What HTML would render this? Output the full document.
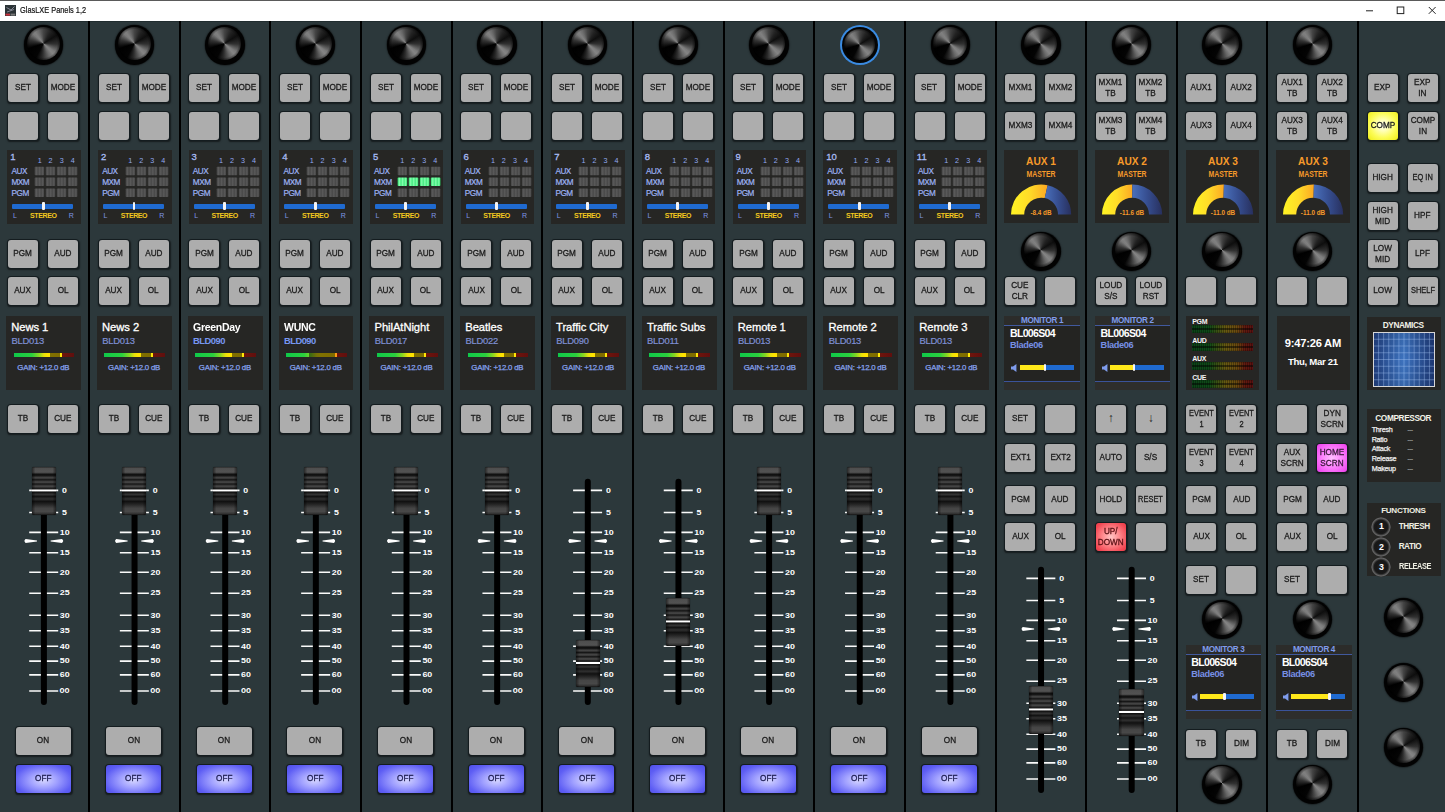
<!DOCTYPE html>
<html lang="en"><head><meta charset="utf-8"><title>GlasLXE Panels 1,2</title>
<style>
*{box-sizing:border-box}
html,body{margin:0;padding:0}
body{width:1445px;height:812px;position:relative;overflow:hidden;background:#2c383b;font-family:"Liberation Sans",sans-serif;color:#222}
.a,.b,.k,.pn,.dv,.t{position:absolute}
#tb{position:absolute;left:0;top:0;width:1445px;height:21px;background:#fff;border-top:1px solid #5a5a5a}
#tb .ti{position:absolute;left:19.5px;top:4px;font-size:9.3px;line-height:11px;color:#111;white-space:nowrap;transform:scaleX(.795);transform-origin:0 0;-webkit-text-stroke:.2px #111}
.dv{top:21px;width:2px;height:791px;background:#000}
.b{width:30px;height:28px;background:#adadad;border-radius:3px;box-shadow:0 0 0 1px #141c1f,.5px 1px 1.5px .6px rgba(0,0,0,.5);font-size:9.3px;line-height:10.8px;text-align:center;color:#1c1c1c;display:flex;align-items:center;justify-content:center;white-space:nowrap}
.b span{display:block;position:relative;top:-.3px;transform:scaleX(.88);-webkit-text-stroke:.32px currentColor}
.b span.n{transform:scaleX(.8)}
.b span.ar{font-size:12px;transform:none;-webkit-text-stroke:0}
.b.w{width:55px}
.b.blue{background:radial-gradient(ellipse at 50% 55%,#d6d6ff 0%,#a0a0ff 35%,#5e5ef4 75%,#4e4ee8 100%);color:#1c1c50}
.b.red{background:radial-gradient(ellipse at 50% 50%,#ffc4c4 0%,#ff8a8e 40%,#f2434f 85%);color:#5a1014}
.b.yel{background:radial-gradient(ellipse at 50% 48%,#fffff6 0%,#ffffb4 28%,#fcfc58 60%,#f2f022 92%)}
.b.mag{background:radial-gradient(ellipse at 50% 50%,#ffc0ff 0%,#fc84fc 45%,#f048f0 90%);color:#3a1a3a}
.k{width:39.4px;height:39.4px;border-radius:50%;background:#020202;box-shadow:0 0 1.5px .5px rgba(0,0,0,.6)}
.k i{position:absolute;left:2.9px;top:1.9px;width:33.2px;height:33.2px;filter:blur(.3px);border-radius:50%;background:radial-gradient(circle closest-side,rgba(0,0,0,0) 0,rgba(0,0,0,0) 84%,rgba(0,0,0,.45) 100%),conic-gradient(from 0deg,#444 0deg,#222 30deg,#0e0e0e 58deg,#303030 92deg,#7c7c7c 126deg,#848484 138deg,#6a6a6a 155deg,#2a2a2a 185deg,#040404 208deg,#000 252deg,#343434 284deg,#7a7a7a 312deg,#808080 322deg,#6c6c6c 338deg,#444 360deg)}
.k.sel{background:#050505;box-shadow:0 0 0 2px #3a8be2}
.k.sel{width:36px;height:36px}
.k.sel i{left:2.2px;top:1.6px;width:31.5px;height:31.5px}
.pn{background:#262624}
.t{white-space:nowrap;line-height:1}
.cell{position:absolute;width:9.6px;height:8.6px;background:linear-gradient(90deg,#444,#585858 22%,#484848 40%,#585858 58%,#484848 76%,#545454 90%,#424242);border-radius:1px;filter:blur(.45px)}
.cell.g{background:linear-gradient(90deg,#2cd868,#7cffa8 30%,#48ec84 50%,#7cffa8 70%,#2cd868)}
.cap{position:absolute;width:24.2px;height:47.4px;border-radius:1.5px;background:linear-gradient(180deg,rgba(255,255,255,0) 46.2%,#fff 47.6%,#fff 50.2%,rgba(255,255,255,0) 51.6%),linear-gradient(90deg,rgba(0,0,0,.5),rgba(0,0,0,0) 14%,rgba(0,0,0,0) 86%,rgba(0,0,0,.5)),linear-gradient(180deg,#2a2a2a 0%,#4e4e4e 3%,#525252 10%,#484848 12%,#101010 15%,#161616 18%,#404040 21.5%,#444 23%,#151515 26.5%,#424242 30.5%,#464646 32%,#161616 35.5%,#444 39.5%,#444 41%,#1a1a1a 44.5%,#2c2c2c 46%,#101010 52.5%,#353535 57%,#131313 61.5%,#303030 66.5%,#111 72%,#262626 78%,#454545 86%,#484848 93%,#333 97%,#141414 100%);box-shadow:0 0 1px rgba(0,0,0,.8)}
</style></head>
<body>
<div id="tb"><svg class="a" style="left:5px;top:4px" width="11" height="11" viewBox="0 0 11 11"><rect width="11" height="11" fill="#2b3336"/><path d="M1.5 2.5 L6 5 L9.5 1.5 M2 7 L9 4.5" stroke="#aab" stroke-width=".7" fill="none"/><rect x="0.5" y="8.6" width="4.5" height="2" fill="#c8323c"/><rect x="5.6" y="8.6" width="4.6" height="2" fill="#777"/></svg><span class="ti">GlasLXE Panels 1,2</span><svg class="a" style="left:1360px;top:0" width="85" height="20" viewBox="0 0 85 20"><g stroke="#222" stroke-width="1" fill="none"><path d="M6 9.8H13"/><rect x="37.2" y="6" width="6.6" height="6.6"/><path d="M68.8 6L75.6 12.8M75.6 6L68.8 12.8"/></g></svg></div>
<svg width="0" height="0" style="position:absolute"><defs><linearGradient id="cd" x1="0" x2="1" y1="0" y2="0" gradientUnits="objectBoundingBox"><stop offset="0" stop-color="#444"/><stop offset=".2" stop-color="#5a5a5a"/><stop offset=".36" stop-color="#484848"/><stop offset=".52" stop-color="#5a5a5a"/><stop offset=".68" stop-color="#484848"/><stop offset=".84" stop-color="#585858"/><stop offset="1" stop-color="#434343"/></linearGradient><linearGradient id="cg" x1="0" x2="1" y1="0" y2="0" gradientUnits="objectBoundingBox"><stop offset="0" stop-color="#2cd868"/><stop offset=".2" stop-color="#84ffae"/><stop offset=".36" stop-color="#44e880"/><stop offset=".52" stop-color="#84ffae"/><stop offset=".68" stop-color="#44e880"/><stop offset=".84" stop-color="#7cffa8"/><stop offset="1" stop-color="#2cd868"/></linearGradient></defs></svg>
<div class="a" style="left:0;top:21px;width:1445px;height:1.4px;background:linear-gradient(180deg,#1c2729,#263235)"></div><div class="dv" style="left:88.00px"></div><div class="dv" style="left:178.65px"></div><div class="dv" style="left:269.30px"></div><div class="dv" style="left:359.95px"></div><div class="dv" style="left:450.60px"></div><div class="dv" style="left:541.25px"></div><div class="dv" style="left:631.90px"></div><div class="dv" style="left:722.55px"></div><div class="dv" style="left:813.20px"></div><div class="dv" style="left:903.85px"></div><div class="dv" style="left:994.50px"></div><div class="dv" style="left:1085.15px"></div><div class="dv" style="left:1175.80px"></div><div class="dv" style="left:1266.45px"></div><div class="dv" style="left:1357.10px"></div>

<!-- channel 1 -->
<div class="k" style="left:24.00px;top:25.40px"><i></i></div><div class="b" style="left:8.00px;top:74px"><span>SET</span></div><div class="b" style="left:48.00px;top:74px"><span>MODE</span></div><div class="b" style="left:8.00px;top:112px"></div><div class="b" style="left:48.00px;top:112px"></div><div class="pn" style="left:7.30px;top:150.3px;width:73.6px;height:73.3px"><div class="t" style="left:3.00px;top:2.20px;font-size:9.5px;color:#a8bcf4;-webkit-text-stroke:.3px #a8bcf4;">1</div><div class="t" style="left:32.40px;top:6.80px;font-size:7.2px;color:#93aaf0;transform:translateX(-50%);">1</div><div class="t" style="left:43.30px;top:6.80px;font-size:7.2px;color:#93aaf0;transform:translateX(-50%);">2</div><div class="t" style="left:54.40px;top:6.80px;font-size:7.2px;color:#93aaf0;transform:translateX(-50%);">3</div><div class="t" style="left:65.40px;top:6.80px;font-size:7.2px;color:#93aaf0;transform:translateX(-50%);">4</div><div class="t" style="left:4.20px;top:17.40px;font-size:8.2px;color:#9db2f2;letter-spacing:-.45px;-webkit-text-stroke:.2px #9db2f2;">AUX</div><div class="t" style="left:4.20px;top:28.40px;font-size:8.2px;color:#9db2f2;letter-spacing:-.45px;-webkit-text-stroke:.2px #9db2f2;">MXM</div><div class="t" style="left:4.20px;top:39.30px;font-size:8.2px;color:#9db2f2;letter-spacing:-.45px;-webkit-text-stroke:.2px #9db2f2;">PGM</div><svg class="a" style="left:0;top:0;filter:blur(.35px)" width="74" height="50" viewBox="0 0 74 50"><rect x="27.6" y="16.7" width="9.6" height="8.5" rx=".8" fill="url(#cd)"/><rect x="38.7" y="16.7" width="9.6" height="8.5" rx=".8" fill="url(#cd)"/><rect x="49.8" y="16.7" width="9.6" height="8.5" rx=".8" fill="url(#cd)"/><rect x="60.8" y="16.7" width="9.6" height="8.5" rx=".8" fill="url(#cd)"/><rect x="27.6" y="27.6" width="9.6" height="8.5" rx=".8" fill="url(#cd)"/><rect x="38.7" y="27.6" width="9.6" height="8.5" rx=".8" fill="url(#cd)"/><rect x="49.8" y="27.6" width="9.6" height="8.5" rx=".8" fill="url(#cd)"/><rect x="60.8" y="27.6" width="9.6" height="8.5" rx=".8" fill="url(#cd)"/><rect x="27.6" y="38.5" width="9.6" height="8.5" rx=".8" fill="url(#cd)"/><rect x="38.7" y="38.5" width="9.6" height="8.5" rx=".8" fill="url(#cd)"/><rect x="49.8" y="38.5" width="9.6" height="8.5" rx=".8" fill="url(#cd)"/><rect x="60.8" y="38.5" width="9.6" height="8.5" rx=".8" fill="url(#cd)"/></svg><div class="a" style="left:5.2px;top:53.8px;width:61px;height:4.8px;background:#1f6ad0;border-radius:1px"></div><div class="a" style="left:34.6px;top:52.2px;width:2.9px;height:8px;background:#f4f4f4;border-radius:1px"></div><div class="t" style="left:5.60px;top:62.20px;font-size:7px;color:#7f96e4;">L</div><div class="t" style="left:36.00px;top:62.00px;font-size:7px;color:#f2c81e;font-weight:bold;transform:translateX(-50%);letter-spacing:-.4px;">STEREO</div><div class="t" style="left:61.40px;top:62.20px;font-size:7px;color:#7f96e4;">R</div></div><div class="b" style="left:8.00px;top:240px"><span>PGM</span></div><div class="b" style="left:48.00px;top:240px"><span>AUD</span></div><div class="b" style="left:8.00px;top:277px"><span>AUX</span></div><div class="b" style="left:48.00px;top:277px"><span>OL</span></div><div class="pn" style="left:6.10px;top:316.2px;width:74.9px;height:73.6px"><div class="t" style="left:5.20px;top:5.60px;font-size:11.2px;color:#fff;letter-spacing:-.05px;-webkit-text-stroke:.3px #fff;">News 1</div><div class="t" style="left:5.40px;top:19.50px;font-size:9.4px;color:#7f90d4;letter-spacing:-.25px;-webkit-text-stroke:.2px #7f90d4;">BLD013</div><div class="a" style="left:7.6px;top:36.8px;width:60.8px;height:4.2px;background:linear-gradient(90deg,#0ec849 0.0%,#2bcf3e 30.0%,#2cd03d 30.0%,#8bd720 42.0%,#8cd81f 42.0%,#e7df0c 50.0%,#e8e00b 50.0%,#fee300 56.0%,#ffe300 56.0%,#ffe100 60.5%,#7f7000 60.5%,#7f6b00 77.0%,#ffe808 77.0%,#ffe808 80.0%,#70150c 80.0%,#5f0f0e 100.0%)"></div><div class="t" style="left:37.20px;top:47.80px;font-size:7.8px;color:#86a2ee;transform:translateX(-50%);letter-spacing:-.2px;-webkit-text-stroke:.25px #86a2ee;">GAIN: +12.0 dB</div></div><div class="b" style="left:8.00px;top:405px"><span>TB</span></div><div class="b" style="left:48.00px;top:405px"><span>CUE</span></div><svg class="a" style="left:20px;top:474px" width="62" height="238" viewBox="0 0 62 238"><g transform="translate(0.00 0.40)"><rect x="20.9" y="4.3" width="6" height="226.2" rx="3" fill="#000"/><g stroke="#fafafa" stroke-width="1.6"><path d="M9.2 16.0H20.9M26.9 16.0H38.2"/><path d="M9.2 38.1H20.9M26.9 38.1H38.2"/><path d="M9.2 58.0H20.9M26.9 58.0H38.2"/><path d="M9.2 78.3H20.9M26.9 78.3H38.2"/><path d="M9.2 97.9H20.9M26.9 97.9H38.2"/><path d="M9.2 118.8H20.9M26.9 118.8H38.2"/><path d="M9.2 140.9H20.9M26.9 140.9H38.2"/><path d="M9.2 156.3H20.9M26.9 156.3H38.2"/><path d="M9.2 171.8H20.9M26.9 171.8H38.2"/><path d="M9.2 186.7H20.9M26.9 186.7H38.2"/><path d="M9.2 200.5H20.9M26.9 200.5H38.2"/><path d="M9.2 216.6H20.9M26.9 216.6H38.2"/></g><path d="M5.6 64.7Q3.2 66.6 5.6 68.5L17 67.0V66.1Z" fill="#fff"/><path d="M42 64.7Q44.4 66.6 42 68.5L30.6 67.0V66.1Z" fill="#fff"/><g font-family="Liberation Sans, sans-serif" font-weight="bold" font-size="7.6" fill="#fff"><text x="42" y="18.4" textLength="4.9" lengthAdjust="spacingAndGlyphs">0</text><text x="42" y="40.5" textLength="4.9" lengthAdjust="spacingAndGlyphs">5</text><text x="39.8" y="60.4" textLength="9.9" lengthAdjust="spacingAndGlyphs">10</text><text x="39.8" y="80.6" textLength="9.9" lengthAdjust="spacingAndGlyphs">15</text><text x="39.8" y="100.2" textLength="9.9" lengthAdjust="spacingAndGlyphs">20</text><text x="39.8" y="121.1" textLength="9.9" lengthAdjust="spacingAndGlyphs">25</text><text x="39.8" y="143.2" textLength="9.9" lengthAdjust="spacingAndGlyphs">30</text><text x="39.8" y="158.7" textLength="9.9" lengthAdjust="spacingAndGlyphs">35</text><text x="39.8" y="174.2" textLength="9.9" lengthAdjust="spacingAndGlyphs">40</text><text x="39.8" y="189.0" textLength="9.9" lengthAdjust="spacingAndGlyphs">50</text><text x="39.8" y="202.8" textLength="9.9" lengthAdjust="spacingAndGlyphs">60</text><text x="39.6" y="218.8" font-size="8.4" textLength="10" lengthAdjust="spacingAndGlyphs">oo</text></g></g></svg><div class="cap" style="left:31.60px;top:467.30px"></div><div class="b w" style="left:15.50px;top:727px"><span>ON</span></div><div class="b w blue" style="left:15.50px;top:765px"><span>OFF</span></div>
<!-- channel 2 -->
<div class="k" style="left:114.65px;top:25.40px"><i></i></div><div class="b" style="left:98.65px;top:74px"><span>SET</span></div><div class="b" style="left:138.65px;top:74px"><span>MODE</span></div><div class="b" style="left:98.65px;top:112px"></div><div class="b" style="left:138.65px;top:112px"></div><div class="pn" style="left:97.95px;top:150.3px;width:73.6px;height:73.3px"><div class="t" style="left:3.00px;top:2.20px;font-size:9.5px;color:#a8bcf4;-webkit-text-stroke:.3px #a8bcf4;">2</div><div class="t" style="left:32.40px;top:6.80px;font-size:7.2px;color:#93aaf0;transform:translateX(-50%);">1</div><div class="t" style="left:43.30px;top:6.80px;font-size:7.2px;color:#93aaf0;transform:translateX(-50%);">2</div><div class="t" style="left:54.40px;top:6.80px;font-size:7.2px;color:#93aaf0;transform:translateX(-50%);">3</div><div class="t" style="left:65.40px;top:6.80px;font-size:7.2px;color:#93aaf0;transform:translateX(-50%);">4</div><div class="t" style="left:4.20px;top:17.40px;font-size:8.2px;color:#9db2f2;letter-spacing:-.45px;-webkit-text-stroke:.2px #9db2f2;">AUX</div><div class="t" style="left:4.20px;top:28.40px;font-size:8.2px;color:#9db2f2;letter-spacing:-.45px;-webkit-text-stroke:.2px #9db2f2;">MXM</div><div class="t" style="left:4.20px;top:39.30px;font-size:8.2px;color:#9db2f2;letter-spacing:-.45px;-webkit-text-stroke:.2px #9db2f2;">PGM</div><svg class="a" style="left:0;top:0;filter:blur(.35px)" width="74" height="50" viewBox="0 0 74 50"><rect x="27.6" y="16.7" width="9.6" height="8.5" rx=".8" fill="url(#cd)"/><rect x="38.7" y="16.7" width="9.6" height="8.5" rx=".8" fill="url(#cd)"/><rect x="49.8" y="16.7" width="9.6" height="8.5" rx=".8" fill="url(#cd)"/><rect x="60.8" y="16.7" width="9.6" height="8.5" rx=".8" fill="url(#cd)"/><rect x="27.6" y="27.6" width="9.6" height="8.5" rx=".8" fill="url(#cd)"/><rect x="38.7" y="27.6" width="9.6" height="8.5" rx=".8" fill="url(#cd)"/><rect x="49.8" y="27.6" width="9.6" height="8.5" rx=".8" fill="url(#cd)"/><rect x="60.8" y="27.6" width="9.6" height="8.5" rx=".8" fill="url(#cd)"/><rect x="27.6" y="38.5" width="9.6" height="8.5" rx=".8" fill="url(#cd)"/><rect x="38.7" y="38.5" width="9.6" height="8.5" rx=".8" fill="url(#cd)"/><rect x="49.8" y="38.5" width="9.6" height="8.5" rx=".8" fill="url(#cd)"/><rect x="60.8" y="38.5" width="9.6" height="8.5" rx=".8" fill="url(#cd)"/></svg><div class="a" style="left:5.2px;top:53.8px;width:61px;height:4.8px;background:#1f6ad0;border-radius:1px"></div><div class="a" style="left:34.6px;top:52.2px;width:2.9px;height:8px;background:#f4f4f4;border-radius:1px"></div><div class="t" style="left:5.60px;top:62.20px;font-size:7px;color:#7f96e4;">L</div><div class="t" style="left:36.00px;top:62.00px;font-size:7px;color:#f2c81e;font-weight:bold;transform:translateX(-50%);letter-spacing:-.4px;">STEREO</div><div class="t" style="left:61.40px;top:62.20px;font-size:7px;color:#7f96e4;">R</div></div><div class="b" style="left:98.65px;top:240px"><span>PGM</span></div><div class="b" style="left:138.65px;top:240px"><span>AUD</span></div><div class="b" style="left:98.65px;top:277px"><span>AUX</span></div><div class="b" style="left:138.65px;top:277px"><span>OL</span></div><div class="pn" style="left:96.90px;top:316.2px;width:74.9px;height:73.6px"><div class="t" style="left:5.20px;top:5.60px;font-size:11.2px;color:#fff;letter-spacing:-.05px;-webkit-text-stroke:.3px #fff;">News 2</div><div class="t" style="left:5.40px;top:19.50px;font-size:9.4px;color:#7f90d4;letter-spacing:-.25px;-webkit-text-stroke:.2px #7f90d4;">BLD013</div><div class="a" style="left:7.6px;top:36.8px;width:60.8px;height:4.2px;background:linear-gradient(90deg,#0ec849 0.0%,#2bcf3e 30.0%,#2cd03d 30.0%,#8bd720 42.0%,#8cd81f 42.0%,#e7df0c 50.0%,#e8e00b 50.0%,#fee300 56.0%,#ffe300 56.0%,#ffe100 60.5%,#7f7000 60.5%,#7f6b00 77.0%,#ffe808 77.0%,#ffe808 80.0%,#70150c 80.0%,#5f0f0e 100.0%)"></div><div class="t" style="left:37.20px;top:47.80px;font-size:7.8px;color:#86a2ee;transform:translateX(-50%);letter-spacing:-.2px;-webkit-text-stroke:.25px #86a2ee;">GAIN: +12.0 dB</div></div><div class="b" style="left:98.65px;top:405px"><span>TB</span></div><div class="b" style="left:138.65px;top:405px"><span>CUE</span></div><svg class="a" style="left:110px;top:474px" width="62" height="238" viewBox="0 0 62 238"><g transform="translate(0.65 0.40)"><rect x="20.9" y="4.3" width="6" height="226.2" rx="3" fill="#000"/><g stroke="#fafafa" stroke-width="1.6"><path d="M9.2 16.0H20.9M26.9 16.0H38.2"/><path d="M9.2 38.1H20.9M26.9 38.1H38.2"/><path d="M9.2 58.0H20.9M26.9 58.0H38.2"/><path d="M9.2 78.3H20.9M26.9 78.3H38.2"/><path d="M9.2 97.9H20.9M26.9 97.9H38.2"/><path d="M9.2 118.8H20.9M26.9 118.8H38.2"/><path d="M9.2 140.9H20.9M26.9 140.9H38.2"/><path d="M9.2 156.3H20.9M26.9 156.3H38.2"/><path d="M9.2 171.8H20.9M26.9 171.8H38.2"/><path d="M9.2 186.7H20.9M26.9 186.7H38.2"/><path d="M9.2 200.5H20.9M26.9 200.5H38.2"/><path d="M9.2 216.6H20.9M26.9 216.6H38.2"/></g><path d="M5.6 64.7Q3.2 66.6 5.6 68.5L17 67.0V66.1Z" fill="#fff"/><path d="M42 64.7Q44.4 66.6 42 68.5L30.6 67.0V66.1Z" fill="#fff"/><g font-family="Liberation Sans, sans-serif" font-weight="bold" font-size="7.6" fill="#fff"><text x="42" y="18.4" textLength="4.9" lengthAdjust="spacingAndGlyphs">0</text><text x="42" y="40.5" textLength="4.9" lengthAdjust="spacingAndGlyphs">5</text><text x="39.8" y="60.4" textLength="9.9" lengthAdjust="spacingAndGlyphs">10</text><text x="39.8" y="80.6" textLength="9.9" lengthAdjust="spacingAndGlyphs">15</text><text x="39.8" y="100.2" textLength="9.9" lengthAdjust="spacingAndGlyphs">20</text><text x="39.8" y="121.1" textLength="9.9" lengthAdjust="spacingAndGlyphs">25</text><text x="39.8" y="143.2" textLength="9.9" lengthAdjust="spacingAndGlyphs">30</text><text x="39.8" y="158.7" textLength="9.9" lengthAdjust="spacingAndGlyphs">35</text><text x="39.8" y="174.2" textLength="9.9" lengthAdjust="spacingAndGlyphs">40</text><text x="39.8" y="189.0" textLength="9.9" lengthAdjust="spacingAndGlyphs">50</text><text x="39.8" y="202.8" textLength="9.9" lengthAdjust="spacingAndGlyphs">60</text><text x="39.6" y="218.8" font-size="8.4" textLength="10" lengthAdjust="spacingAndGlyphs">oo</text></g></g></svg><div class="cap" style="left:122.25px;top:467.30px"></div><div class="b w" style="left:106.15px;top:727px"><span>ON</span></div><div class="b w blue" style="left:106.15px;top:765px"><span>OFF</span></div>
<!-- channel 3 -->
<div class="k" style="left:205.30px;top:25.40px"><i></i></div><div class="b" style="left:189.30px;top:74px"><span>SET</span></div><div class="b" style="left:229.30px;top:74px"><span>MODE</span></div><div class="b" style="left:189.30px;top:112px"></div><div class="b" style="left:229.30px;top:112px"></div><div class="pn" style="left:188.60px;top:150.3px;width:73.6px;height:73.3px"><div class="t" style="left:3.00px;top:2.20px;font-size:9.5px;color:#a8bcf4;-webkit-text-stroke:.3px #a8bcf4;">3</div><div class="t" style="left:32.40px;top:6.80px;font-size:7.2px;color:#93aaf0;transform:translateX(-50%);">1</div><div class="t" style="left:43.30px;top:6.80px;font-size:7.2px;color:#93aaf0;transform:translateX(-50%);">2</div><div class="t" style="left:54.40px;top:6.80px;font-size:7.2px;color:#93aaf0;transform:translateX(-50%);">3</div><div class="t" style="left:65.40px;top:6.80px;font-size:7.2px;color:#93aaf0;transform:translateX(-50%);">4</div><div class="t" style="left:4.20px;top:17.40px;font-size:8.2px;color:#9db2f2;letter-spacing:-.45px;-webkit-text-stroke:.2px #9db2f2;">AUX</div><div class="t" style="left:4.20px;top:28.40px;font-size:8.2px;color:#9db2f2;letter-spacing:-.45px;-webkit-text-stroke:.2px #9db2f2;">MXM</div><div class="t" style="left:4.20px;top:39.30px;font-size:8.2px;color:#9db2f2;letter-spacing:-.45px;-webkit-text-stroke:.2px #9db2f2;">PGM</div><svg class="a" style="left:0;top:0;filter:blur(.35px)" width="74" height="50" viewBox="0 0 74 50"><rect x="27.6" y="16.7" width="9.6" height="8.5" rx=".8" fill="url(#cd)"/><rect x="38.7" y="16.7" width="9.6" height="8.5" rx=".8" fill="url(#cd)"/><rect x="49.8" y="16.7" width="9.6" height="8.5" rx=".8" fill="url(#cd)"/><rect x="60.8" y="16.7" width="9.6" height="8.5" rx=".8" fill="url(#cd)"/><rect x="27.6" y="27.6" width="9.6" height="8.5" rx=".8" fill="url(#cd)"/><rect x="38.7" y="27.6" width="9.6" height="8.5" rx=".8" fill="url(#cd)"/><rect x="49.8" y="27.6" width="9.6" height="8.5" rx=".8" fill="url(#cd)"/><rect x="60.8" y="27.6" width="9.6" height="8.5" rx=".8" fill="url(#cd)"/><rect x="27.6" y="38.5" width="9.6" height="8.5" rx=".8" fill="url(#cd)"/><rect x="38.7" y="38.5" width="9.6" height="8.5" rx=".8" fill="url(#cd)"/><rect x="49.8" y="38.5" width="9.6" height="8.5" rx=".8" fill="url(#cd)"/><rect x="60.8" y="38.5" width="9.6" height="8.5" rx=".8" fill="url(#cd)"/></svg><div class="a" style="left:5.2px;top:53.8px;width:61px;height:4.8px;background:#1f6ad0;border-radius:1px"></div><div class="a" style="left:34.6px;top:52.2px;width:2.9px;height:8px;background:#f4f4f4;border-radius:1px"></div><div class="t" style="left:5.60px;top:62.20px;font-size:7px;color:#7f96e4;">L</div><div class="t" style="left:36.00px;top:62.00px;font-size:7px;color:#f2c81e;font-weight:bold;transform:translateX(-50%);letter-spacing:-.4px;">STEREO</div><div class="t" style="left:61.40px;top:62.20px;font-size:7px;color:#7f96e4;">R</div></div><div class="b" style="left:189.30px;top:240px"><span>PGM</span></div><div class="b" style="left:229.30px;top:240px"><span>AUD</span></div><div class="b" style="left:189.30px;top:277px"><span>AUX</span></div><div class="b" style="left:229.30px;top:277px"><span>OL</span></div><div class="pn" style="left:187.70px;top:316.2px;width:74.9px;height:73.6px"><div class="t" style="left:5.20px;top:5.60px;font-size:11.2px;color:#fff;font-weight:bold;transform:scaleX(0.94);transform-origin:0 50%;letter-spacing:-.3px;">GreenDay</div><div class="t" style="left:5.40px;top:19.50px;font-size:9.4px;color:#7696f0;font-weight:bold;letter-spacing:-.5px;">BLD090</div><div class="a" style="left:7.6px;top:36.8px;width:60.8px;height:4.2px;background:linear-gradient(90deg,#0ec849 0.0%,#2bcf3e 30.0%,#2cd03d 30.0%,#8bd720 42.0%,#8cd81f 42.0%,#e7df0c 50.0%,#e8e00b 50.0%,#fee300 56.0%,#ffe300 56.0%,#ffe100 60.5%,#7f7000 60.5%,#7f6b00 77.0%,#ffe808 77.0%,#ffe808 80.0%,#70150c 80.0%,#5f0f0e 100.0%)"></div><div class="t" style="left:37.20px;top:47.80px;font-size:7.8px;color:#86a2ee;transform:translateX(-50%);letter-spacing:-.2px;-webkit-text-stroke:.25px #86a2ee;">GAIN: +12.0 dB</div></div><div class="b" style="left:189.30px;top:405px"><span>TB</span></div><div class="b" style="left:229.30px;top:405px"><span>CUE</span></div><svg class="a" style="left:201px;top:474px" width="62" height="238" viewBox="0 0 62 238"><g transform="translate(0.30 0.40)"><rect x="20.9" y="4.3" width="6" height="226.2" rx="3" fill="#000"/><g stroke="#fafafa" stroke-width="1.6"><path d="M9.2 16.0H20.9M26.9 16.0H38.2"/><path d="M9.2 38.1H20.9M26.9 38.1H38.2"/><path d="M9.2 58.0H20.9M26.9 58.0H38.2"/><path d="M9.2 78.3H20.9M26.9 78.3H38.2"/><path d="M9.2 97.9H20.9M26.9 97.9H38.2"/><path d="M9.2 118.8H20.9M26.9 118.8H38.2"/><path d="M9.2 140.9H20.9M26.9 140.9H38.2"/><path d="M9.2 156.3H20.9M26.9 156.3H38.2"/><path d="M9.2 171.8H20.9M26.9 171.8H38.2"/><path d="M9.2 186.7H20.9M26.9 186.7H38.2"/><path d="M9.2 200.5H20.9M26.9 200.5H38.2"/><path d="M9.2 216.6H20.9M26.9 216.6H38.2"/></g><path d="M5.6 64.7Q3.2 66.6 5.6 68.5L17 67.0V66.1Z" fill="#fff"/><path d="M42 64.7Q44.4 66.6 42 68.5L30.6 67.0V66.1Z" fill="#fff"/><g font-family="Liberation Sans, sans-serif" font-weight="bold" font-size="7.6" fill="#fff"><text x="42" y="18.4" textLength="4.9" lengthAdjust="spacingAndGlyphs">0</text><text x="42" y="40.5" textLength="4.9" lengthAdjust="spacingAndGlyphs">5</text><text x="39.8" y="60.4" textLength="9.9" lengthAdjust="spacingAndGlyphs">10</text><text x="39.8" y="80.6" textLength="9.9" lengthAdjust="spacingAndGlyphs">15</text><text x="39.8" y="100.2" textLength="9.9" lengthAdjust="spacingAndGlyphs">20</text><text x="39.8" y="121.1" textLength="9.9" lengthAdjust="spacingAndGlyphs">25</text><text x="39.8" y="143.2" textLength="9.9" lengthAdjust="spacingAndGlyphs">30</text><text x="39.8" y="158.7" textLength="9.9" lengthAdjust="spacingAndGlyphs">35</text><text x="39.8" y="174.2" textLength="9.9" lengthAdjust="spacingAndGlyphs">40</text><text x="39.8" y="189.0" textLength="9.9" lengthAdjust="spacingAndGlyphs">50</text><text x="39.8" y="202.8" textLength="9.9" lengthAdjust="spacingAndGlyphs">60</text><text x="39.6" y="218.8" font-size="8.4" textLength="10" lengthAdjust="spacingAndGlyphs">oo</text></g></g></svg><div class="cap" style="left:212.90px;top:467.30px"></div><div class="b w" style="left:196.80px;top:727px"><span>ON</span></div><div class="b w blue" style="left:196.80px;top:765px"><span>OFF</span></div>
<!-- channel 4 -->
<div class="k" style="left:295.95px;top:25.40px"><i></i></div><div class="b" style="left:279.95px;top:74px"><span>SET</span></div><div class="b" style="left:319.95px;top:74px"><span>MODE</span></div><div class="b" style="left:279.95px;top:112px"></div><div class="b" style="left:319.95px;top:112px"></div><div class="pn" style="left:279.25px;top:150.3px;width:73.6px;height:73.3px"><div class="t" style="left:3.00px;top:2.20px;font-size:9.5px;color:#a8bcf4;-webkit-text-stroke:.3px #a8bcf4;">4</div><div class="t" style="left:32.40px;top:6.80px;font-size:7.2px;color:#93aaf0;transform:translateX(-50%);">1</div><div class="t" style="left:43.30px;top:6.80px;font-size:7.2px;color:#93aaf0;transform:translateX(-50%);">2</div><div class="t" style="left:54.40px;top:6.80px;font-size:7.2px;color:#93aaf0;transform:translateX(-50%);">3</div><div class="t" style="left:65.40px;top:6.80px;font-size:7.2px;color:#93aaf0;transform:translateX(-50%);">4</div><div class="t" style="left:4.20px;top:17.40px;font-size:8.2px;color:#9db2f2;letter-spacing:-.45px;-webkit-text-stroke:.2px #9db2f2;">AUX</div><div class="t" style="left:4.20px;top:28.40px;font-size:8.2px;color:#9db2f2;letter-spacing:-.45px;-webkit-text-stroke:.2px #9db2f2;">MXM</div><div class="t" style="left:4.20px;top:39.30px;font-size:8.2px;color:#9db2f2;letter-spacing:-.45px;-webkit-text-stroke:.2px #9db2f2;">PGM</div><svg class="a" style="left:0;top:0;filter:blur(.35px)" width="74" height="50" viewBox="0 0 74 50"><rect x="27.6" y="16.7" width="9.6" height="8.5" rx=".8" fill="url(#cd)"/><rect x="38.7" y="16.7" width="9.6" height="8.5" rx=".8" fill="url(#cd)"/><rect x="49.8" y="16.7" width="9.6" height="8.5" rx=".8" fill="url(#cd)"/><rect x="60.8" y="16.7" width="9.6" height="8.5" rx=".8" fill="url(#cd)"/><rect x="27.6" y="27.6" width="9.6" height="8.5" rx=".8" fill="url(#cd)"/><rect x="38.7" y="27.6" width="9.6" height="8.5" rx=".8" fill="url(#cd)"/><rect x="49.8" y="27.6" width="9.6" height="8.5" rx=".8" fill="url(#cd)"/><rect x="60.8" y="27.6" width="9.6" height="8.5" rx=".8" fill="url(#cd)"/><rect x="27.6" y="38.5" width="9.6" height="8.5" rx=".8" fill="url(#cd)"/><rect x="38.7" y="38.5" width="9.6" height="8.5" rx=".8" fill="url(#cd)"/><rect x="49.8" y="38.5" width="9.6" height="8.5" rx=".8" fill="url(#cd)"/><rect x="60.8" y="38.5" width="9.6" height="8.5" rx=".8" fill="url(#cd)"/></svg><div class="a" style="left:5.2px;top:53.8px;width:61px;height:4.8px;background:#1f6ad0;border-radius:1px"></div><div class="a" style="left:34.6px;top:52.2px;width:2.9px;height:8px;background:#f4f4f4;border-radius:1px"></div><div class="t" style="left:5.60px;top:62.20px;font-size:7px;color:#7f96e4;">L</div><div class="t" style="left:36.00px;top:62.00px;font-size:7px;color:#f2c81e;font-weight:bold;transform:translateX(-50%);letter-spacing:-.4px;">STEREO</div><div class="t" style="left:61.40px;top:62.20px;font-size:7px;color:#7f96e4;">R</div></div><div class="b" style="left:279.95px;top:240px"><span>PGM</span></div><div class="b" style="left:319.95px;top:240px"><span>AUD</span></div><div class="b" style="left:279.95px;top:277px"><span>AUX</span></div><div class="b" style="left:319.95px;top:277px"><span>OL</span></div><div class="pn" style="left:278.50px;top:316.2px;width:74.9px;height:73.6px"><div class="t" style="left:5.20px;top:5.60px;font-size:11.2px;color:#fff;font-weight:bold;transform:scaleX(0.94);transform-origin:0 50%;letter-spacing:-.3px;">WUNC</div><div class="t" style="left:5.40px;top:19.50px;font-size:9.4px;color:#7696f0;font-weight:bold;letter-spacing:-.5px;">BLD090</div><div class="a" style="left:7.6px;top:36.8px;width:60.8px;height:4.2px;background:linear-gradient(90deg,#0ec849 0.0%,#2bcf3e 30.0%,#2cd03d 30.0%,#6fd528 38.5%,#386a14 38.5%,#456b10 42.0%,#466c0f 42.0%,#736f06 50.0%,#747005 50.0%,#7f7100 56.0%,#7f6b00 80.0%,#ff9a14 80.0%,#ff9a14 83.5%,#6d140c 83.5%,#5f0f0e 100.0%)"></div><div class="t" style="left:37.20px;top:47.80px;font-size:7.8px;color:#86a2ee;transform:translateX(-50%);letter-spacing:-.2px;-webkit-text-stroke:.25px #86a2ee;">GAIN: +12.0 dB</div></div><div class="b" style="left:279.95px;top:405px"><span>TB</span></div><div class="b" style="left:319.95px;top:405px"><span>CUE</span></div><svg class="a" style="left:291px;top:474px" width="62" height="238" viewBox="0 0 62 238"><g transform="translate(0.95 0.40)"><rect x="20.9" y="4.3" width="6" height="226.2" rx="3" fill="#000"/><g stroke="#fafafa" stroke-width="1.6"><path d="M9.2 16.0H20.9M26.9 16.0H38.2"/><path d="M9.2 38.1H20.9M26.9 38.1H38.2"/><path d="M9.2 58.0H20.9M26.9 58.0H38.2"/><path d="M9.2 78.3H20.9M26.9 78.3H38.2"/><path d="M9.2 97.9H20.9M26.9 97.9H38.2"/><path d="M9.2 118.8H20.9M26.9 118.8H38.2"/><path d="M9.2 140.9H20.9M26.9 140.9H38.2"/><path d="M9.2 156.3H20.9M26.9 156.3H38.2"/><path d="M9.2 171.8H20.9M26.9 171.8H38.2"/><path d="M9.2 186.7H20.9M26.9 186.7H38.2"/><path d="M9.2 200.5H20.9M26.9 200.5H38.2"/><path d="M9.2 216.6H20.9M26.9 216.6H38.2"/></g><path d="M5.6 64.7Q3.2 66.6 5.6 68.5L17 67.0V66.1Z" fill="#fff"/><path d="M42 64.7Q44.4 66.6 42 68.5L30.6 67.0V66.1Z" fill="#fff"/><g font-family="Liberation Sans, sans-serif" font-weight="bold" font-size="7.6" fill="#fff"><text x="42" y="18.4" textLength="4.9" lengthAdjust="spacingAndGlyphs">0</text><text x="42" y="40.5" textLength="4.9" lengthAdjust="spacingAndGlyphs">5</text><text x="39.8" y="60.4" textLength="9.9" lengthAdjust="spacingAndGlyphs">10</text><text x="39.8" y="80.6" textLength="9.9" lengthAdjust="spacingAndGlyphs">15</text><text x="39.8" y="100.2" textLength="9.9" lengthAdjust="spacingAndGlyphs">20</text><text x="39.8" y="121.1" textLength="9.9" lengthAdjust="spacingAndGlyphs">25</text><text x="39.8" y="143.2" textLength="9.9" lengthAdjust="spacingAndGlyphs">30</text><text x="39.8" y="158.7" textLength="9.9" lengthAdjust="spacingAndGlyphs">35</text><text x="39.8" y="174.2" textLength="9.9" lengthAdjust="spacingAndGlyphs">40</text><text x="39.8" y="189.0" textLength="9.9" lengthAdjust="spacingAndGlyphs">50</text><text x="39.8" y="202.8" textLength="9.9" lengthAdjust="spacingAndGlyphs">60</text><text x="39.6" y="218.8" font-size="8.4" textLength="10" lengthAdjust="spacingAndGlyphs">oo</text></g></g></svg><div class="cap" style="left:303.55px;top:467.30px"></div><div class="b w" style="left:287.45px;top:727px"><span>ON</span></div><div class="b w blue" style="left:287.45px;top:765px"><span>OFF</span></div>
<!-- channel 5 -->
<div class="k" style="left:386.60px;top:25.40px"><i></i></div><div class="b" style="left:370.60px;top:74px"><span>SET</span></div><div class="b" style="left:410.60px;top:74px"><span>MODE</span></div><div class="b" style="left:370.60px;top:112px"></div><div class="b" style="left:410.60px;top:112px"></div><div class="pn" style="left:369.90px;top:150.3px;width:73.6px;height:73.3px"><div class="t" style="left:3.00px;top:2.20px;font-size:9.5px;color:#a8bcf4;-webkit-text-stroke:.3px #a8bcf4;">5</div><div class="t" style="left:32.40px;top:6.80px;font-size:7.2px;color:#93aaf0;transform:translateX(-50%);">1</div><div class="t" style="left:43.30px;top:6.80px;font-size:7.2px;color:#93aaf0;transform:translateX(-50%);">2</div><div class="t" style="left:54.40px;top:6.80px;font-size:7.2px;color:#93aaf0;transform:translateX(-50%);">3</div><div class="t" style="left:65.40px;top:6.80px;font-size:7.2px;color:#93aaf0;transform:translateX(-50%);">4</div><div class="t" style="left:4.20px;top:17.40px;font-size:8.2px;color:#9db2f2;letter-spacing:-.45px;-webkit-text-stroke:.2px #9db2f2;">AUX</div><div class="t" style="left:4.20px;top:28.40px;font-size:8.2px;color:#9db2f2;letter-spacing:-.45px;-webkit-text-stroke:.2px #9db2f2;">MXM</div><div class="t" style="left:4.20px;top:39.30px;font-size:8.2px;color:#9db2f2;letter-spacing:-.45px;-webkit-text-stroke:.2px #9db2f2;">PGM</div><svg class="a" style="left:0;top:0;filter:blur(.35px)" width="74" height="50" viewBox="0 0 74 50"><rect x="27.6" y="16.7" width="9.6" height="8.5" rx=".8" fill="url(#cd)"/><rect x="38.7" y="16.7" width="9.6" height="8.5" rx=".8" fill="url(#cd)"/><rect x="49.8" y="16.7" width="9.6" height="8.5" rx=".8" fill="url(#cd)"/><rect x="60.8" y="16.7" width="9.6" height="8.5" rx=".8" fill="url(#cd)"/><rect x="27.6" y="27.6" width="9.6" height="8.5" rx=".8" fill="url(#cg)"/><rect x="38.7" y="27.6" width="9.6" height="8.5" rx=".8" fill="url(#cg)"/><rect x="49.8" y="27.6" width="9.6" height="8.5" rx=".8" fill="url(#cg)"/><rect x="60.8" y="27.6" width="9.6" height="8.5" rx=".8" fill="url(#cg)"/><rect x="27.6" y="38.5" width="9.6" height="8.5" rx=".8" fill="url(#cd)"/><rect x="38.7" y="38.5" width="9.6" height="8.5" rx=".8" fill="url(#cd)"/><rect x="49.8" y="38.5" width="9.6" height="8.5" rx=".8" fill="url(#cd)"/><rect x="60.8" y="38.5" width="9.6" height="8.5" rx=".8" fill="url(#cd)"/></svg><div class="a" style="left:5.2px;top:53.8px;width:61px;height:4.8px;background:#1f6ad0;border-radius:1px"></div><div class="a" style="left:34.6px;top:52.2px;width:2.9px;height:8px;background:#f4f4f4;border-radius:1px"></div><div class="t" style="left:5.60px;top:62.20px;font-size:7px;color:#7f96e4;">L</div><div class="t" style="left:36.00px;top:62.00px;font-size:7px;color:#f2c81e;font-weight:bold;transform:translateX(-50%);letter-spacing:-.4px;">STEREO</div><div class="t" style="left:61.40px;top:62.20px;font-size:7px;color:#7f96e4;">R</div></div><div class="b" style="left:370.60px;top:240px"><span>PGM</span></div><div class="b" style="left:410.60px;top:240px"><span>AUD</span></div><div class="b" style="left:370.60px;top:277px"><span>AUX</span></div><div class="b" style="left:410.60px;top:277px"><span>OL</span></div><div class="pn" style="left:369.30px;top:316.2px;width:74.9px;height:73.6px"><div class="t" style="left:5.20px;top:5.60px;font-size:11.2px;color:#fff;letter-spacing:-.05px;-webkit-text-stroke:.3px #fff;">PhilAtNight</div><div class="t" style="left:5.40px;top:19.50px;font-size:9.4px;color:#7f90d4;letter-spacing:-.25px;-webkit-text-stroke:.2px #7f90d4;">BLD017</div><div class="a" style="left:7.6px;top:36.8px;width:60.8px;height:4.2px;background:linear-gradient(90deg,#0ec849 0.0%,#2bcf3e 30.0%,#2cd03d 30.0%,#8bd720 42.0%,#8cd81f 42.0%,#e7df0c 50.0%,#e8e00b 50.0%,#fee300 56.0%,#ffe300 56.0%,#ffe100 60.5%,#7f7000 60.5%,#7f6b00 77.0%,#ffe808 77.0%,#ffe808 80.0%,#70150c 80.0%,#5f0f0e 100.0%)"></div><div class="t" style="left:37.20px;top:47.80px;font-size:7.8px;color:#86a2ee;transform:translateX(-50%);letter-spacing:-.2px;-webkit-text-stroke:.25px #86a2ee;">GAIN: +12.0 dB</div></div><div class="b" style="left:370.60px;top:405px"><span>TB</span></div><div class="b" style="left:410.60px;top:405px"><span>CUE</span></div><svg class="a" style="left:382px;top:474px" width="62" height="238" viewBox="0 0 62 238"><g transform="translate(0.60 0.40)"><rect x="20.9" y="4.3" width="6" height="226.2" rx="3" fill="#000"/><g stroke="#fafafa" stroke-width="1.6"><path d="M9.2 16.0H20.9M26.9 16.0H38.2"/><path d="M9.2 38.1H20.9M26.9 38.1H38.2"/><path d="M9.2 58.0H20.9M26.9 58.0H38.2"/><path d="M9.2 78.3H20.9M26.9 78.3H38.2"/><path d="M9.2 97.9H20.9M26.9 97.9H38.2"/><path d="M9.2 118.8H20.9M26.9 118.8H38.2"/><path d="M9.2 140.9H20.9M26.9 140.9H38.2"/><path d="M9.2 156.3H20.9M26.9 156.3H38.2"/><path d="M9.2 171.8H20.9M26.9 171.8H38.2"/><path d="M9.2 186.7H20.9M26.9 186.7H38.2"/><path d="M9.2 200.5H20.9M26.9 200.5H38.2"/><path d="M9.2 216.6H20.9M26.9 216.6H38.2"/></g><path d="M5.6 64.7Q3.2 66.6 5.6 68.5L17 67.0V66.1Z" fill="#fff"/><path d="M42 64.7Q44.4 66.6 42 68.5L30.6 67.0V66.1Z" fill="#fff"/><g font-family="Liberation Sans, sans-serif" font-weight="bold" font-size="7.6" fill="#fff"><text x="42" y="18.4" textLength="4.9" lengthAdjust="spacingAndGlyphs">0</text><text x="42" y="40.5" textLength="4.9" lengthAdjust="spacingAndGlyphs">5</text><text x="39.8" y="60.4" textLength="9.9" lengthAdjust="spacingAndGlyphs">10</text><text x="39.8" y="80.6" textLength="9.9" lengthAdjust="spacingAndGlyphs">15</text><text x="39.8" y="100.2" textLength="9.9" lengthAdjust="spacingAndGlyphs">20</text><text x="39.8" y="121.1" textLength="9.9" lengthAdjust="spacingAndGlyphs">25</text><text x="39.8" y="143.2" textLength="9.9" lengthAdjust="spacingAndGlyphs">30</text><text x="39.8" y="158.7" textLength="9.9" lengthAdjust="spacingAndGlyphs">35</text><text x="39.8" y="174.2" textLength="9.9" lengthAdjust="spacingAndGlyphs">40</text><text x="39.8" y="189.0" textLength="9.9" lengthAdjust="spacingAndGlyphs">50</text><text x="39.8" y="202.8" textLength="9.9" lengthAdjust="spacingAndGlyphs">60</text><text x="39.6" y="218.8" font-size="8.4" textLength="10" lengthAdjust="spacingAndGlyphs">oo</text></g></g></svg><div class="cap" style="left:394.20px;top:467.30px"></div><div class="b w" style="left:378.10px;top:727px"><span>ON</span></div><div class="b w blue" style="left:378.10px;top:765px"><span>OFF</span></div>
<!-- channel 6 -->
<div class="k" style="left:477.25px;top:25.40px"><i></i></div><div class="b" style="left:461.25px;top:74px"><span>SET</span></div><div class="b" style="left:501.25px;top:74px"><span>MODE</span></div><div class="b" style="left:461.25px;top:112px"></div><div class="b" style="left:501.25px;top:112px"></div><div class="pn" style="left:460.55px;top:150.3px;width:73.6px;height:73.3px"><div class="t" style="left:3.00px;top:2.20px;font-size:9.5px;color:#a8bcf4;-webkit-text-stroke:.3px #a8bcf4;">6</div><div class="t" style="left:32.40px;top:6.80px;font-size:7.2px;color:#93aaf0;transform:translateX(-50%);">1</div><div class="t" style="left:43.30px;top:6.80px;font-size:7.2px;color:#93aaf0;transform:translateX(-50%);">2</div><div class="t" style="left:54.40px;top:6.80px;font-size:7.2px;color:#93aaf0;transform:translateX(-50%);">3</div><div class="t" style="left:65.40px;top:6.80px;font-size:7.2px;color:#93aaf0;transform:translateX(-50%);">4</div><div class="t" style="left:4.20px;top:17.40px;font-size:8.2px;color:#9db2f2;letter-spacing:-.45px;-webkit-text-stroke:.2px #9db2f2;">AUX</div><div class="t" style="left:4.20px;top:28.40px;font-size:8.2px;color:#9db2f2;letter-spacing:-.45px;-webkit-text-stroke:.2px #9db2f2;">MXM</div><div class="t" style="left:4.20px;top:39.30px;font-size:8.2px;color:#9db2f2;letter-spacing:-.45px;-webkit-text-stroke:.2px #9db2f2;">PGM</div><svg class="a" style="left:0;top:0;filter:blur(.35px)" width="74" height="50" viewBox="0 0 74 50"><rect x="27.6" y="16.7" width="9.6" height="8.5" rx=".8" fill="url(#cd)"/><rect x="38.7" y="16.7" width="9.6" height="8.5" rx=".8" fill="url(#cd)"/><rect x="49.8" y="16.7" width="9.6" height="8.5" rx=".8" fill="url(#cd)"/><rect x="60.8" y="16.7" width="9.6" height="8.5" rx=".8" fill="url(#cd)"/><rect x="27.6" y="27.6" width="9.6" height="8.5" rx=".8" fill="url(#cd)"/><rect x="38.7" y="27.6" width="9.6" height="8.5" rx=".8" fill="url(#cd)"/><rect x="49.8" y="27.6" width="9.6" height="8.5" rx=".8" fill="url(#cd)"/><rect x="60.8" y="27.6" width="9.6" height="8.5" rx=".8" fill="url(#cd)"/><rect x="27.6" y="38.5" width="9.6" height="8.5" rx=".8" fill="url(#cd)"/><rect x="38.7" y="38.5" width="9.6" height="8.5" rx=".8" fill="url(#cd)"/><rect x="49.8" y="38.5" width="9.6" height="8.5" rx=".8" fill="url(#cd)"/><rect x="60.8" y="38.5" width="9.6" height="8.5" rx=".8" fill="url(#cd)"/></svg><div class="a" style="left:5.2px;top:53.8px;width:61px;height:4.8px;background:#1f6ad0;border-radius:1px"></div><div class="a" style="left:34.6px;top:52.2px;width:2.9px;height:8px;background:#f4f4f4;border-radius:1px"></div><div class="t" style="left:5.60px;top:62.20px;font-size:7px;color:#7f96e4;">L</div><div class="t" style="left:36.00px;top:62.00px;font-size:7px;color:#f2c81e;font-weight:bold;transform:translateX(-50%);letter-spacing:-.4px;">STEREO</div><div class="t" style="left:61.40px;top:62.20px;font-size:7px;color:#7f96e4;">R</div></div><div class="b" style="left:461.25px;top:240px"><span>PGM</span></div><div class="b" style="left:501.25px;top:240px"><span>AUD</span></div><div class="b" style="left:461.25px;top:277px"><span>AUX</span></div><div class="b" style="left:501.25px;top:277px"><span>OL</span></div><div class="pn" style="left:460.10px;top:316.2px;width:74.9px;height:73.6px"><div class="t" style="left:5.20px;top:5.60px;font-size:11.2px;color:#fff;letter-spacing:-.05px;-webkit-text-stroke:.3px #fff;">Beatles</div><div class="t" style="left:5.40px;top:19.50px;font-size:9.4px;color:#7f90d4;letter-spacing:-.25px;-webkit-text-stroke:.2px #7f90d4;">BLD022</div><div class="a" style="left:7.6px;top:36.8px;width:60.8px;height:4.2px;background:linear-gradient(90deg,#0ec849 0.0%,#2bcf3e 30.0%,#2cd03d 30.0%,#8bd720 42.0%,#8cd81f 42.0%,#e7df0c 50.0%,#e8e00b 50.0%,#fee300 56.0%,#ffe300 56.0%,#ffe100 60.5%,#7f7000 60.5%,#7f6b00 77.0%,#ffe808 77.0%,#ffe808 80.0%,#70150c 80.0%,#5f0f0e 100.0%)"></div><div class="t" style="left:37.20px;top:47.80px;font-size:7.8px;color:#86a2ee;transform:translateX(-50%);letter-spacing:-.2px;-webkit-text-stroke:.25px #86a2ee;">GAIN: +12.0 dB</div></div><div class="b" style="left:461.25px;top:405px"><span>TB</span></div><div class="b" style="left:501.25px;top:405px"><span>CUE</span></div><svg class="a" style="left:473px;top:474px" width="62" height="238" viewBox="0 0 62 238"><g transform="translate(0.25 0.40)"><rect x="20.9" y="4.3" width="6" height="226.2" rx="3" fill="#000"/><g stroke="#fafafa" stroke-width="1.6"><path d="M9.2 16.0H20.9M26.9 16.0H38.2"/><path d="M9.2 38.1H20.9M26.9 38.1H38.2"/><path d="M9.2 58.0H20.9M26.9 58.0H38.2"/><path d="M9.2 78.3H20.9M26.9 78.3H38.2"/><path d="M9.2 97.9H20.9M26.9 97.9H38.2"/><path d="M9.2 118.8H20.9M26.9 118.8H38.2"/><path d="M9.2 140.9H20.9M26.9 140.9H38.2"/><path d="M9.2 156.3H20.9M26.9 156.3H38.2"/><path d="M9.2 171.8H20.9M26.9 171.8H38.2"/><path d="M9.2 186.7H20.9M26.9 186.7H38.2"/><path d="M9.2 200.5H20.9M26.9 200.5H38.2"/><path d="M9.2 216.6H20.9M26.9 216.6H38.2"/></g><path d="M5.6 64.7Q3.2 66.6 5.6 68.5L17 67.0V66.1Z" fill="#fff"/><path d="M42 64.7Q44.4 66.6 42 68.5L30.6 67.0V66.1Z" fill="#fff"/><g font-family="Liberation Sans, sans-serif" font-weight="bold" font-size="7.6" fill="#fff"><text x="42" y="18.4" textLength="4.9" lengthAdjust="spacingAndGlyphs">0</text><text x="42" y="40.5" textLength="4.9" lengthAdjust="spacingAndGlyphs">5</text><text x="39.8" y="60.4" textLength="9.9" lengthAdjust="spacingAndGlyphs">10</text><text x="39.8" y="80.6" textLength="9.9" lengthAdjust="spacingAndGlyphs">15</text><text x="39.8" y="100.2" textLength="9.9" lengthAdjust="spacingAndGlyphs">20</text><text x="39.8" y="121.1" textLength="9.9" lengthAdjust="spacingAndGlyphs">25</text><text x="39.8" y="143.2" textLength="9.9" lengthAdjust="spacingAndGlyphs">30</text><text x="39.8" y="158.7" textLength="9.9" lengthAdjust="spacingAndGlyphs">35</text><text x="39.8" y="174.2" textLength="9.9" lengthAdjust="spacingAndGlyphs">40</text><text x="39.8" y="189.0" textLength="9.9" lengthAdjust="spacingAndGlyphs">50</text><text x="39.8" y="202.8" textLength="9.9" lengthAdjust="spacingAndGlyphs">60</text><text x="39.6" y="218.8" font-size="8.4" textLength="10" lengthAdjust="spacingAndGlyphs">oo</text></g></g></svg><div class="cap" style="left:484.85px;top:467.30px"></div><div class="b w" style="left:468.75px;top:727px"><span>ON</span></div><div class="b w blue" style="left:468.75px;top:765px"><span>OFF</span></div>
<!-- channel 7 -->
<div class="k" style="left:567.90px;top:25.40px"><i></i></div><div class="b" style="left:551.90px;top:74px"><span>SET</span></div><div class="b" style="left:591.90px;top:74px"><span>MODE</span></div><div class="b" style="left:551.90px;top:112px"></div><div class="b" style="left:591.90px;top:112px"></div><div class="pn" style="left:551.20px;top:150.3px;width:73.6px;height:73.3px"><div class="t" style="left:3.00px;top:2.20px;font-size:9.5px;color:#a8bcf4;-webkit-text-stroke:.3px #a8bcf4;">7</div><div class="t" style="left:32.40px;top:6.80px;font-size:7.2px;color:#93aaf0;transform:translateX(-50%);">1</div><div class="t" style="left:43.30px;top:6.80px;font-size:7.2px;color:#93aaf0;transform:translateX(-50%);">2</div><div class="t" style="left:54.40px;top:6.80px;font-size:7.2px;color:#93aaf0;transform:translateX(-50%);">3</div><div class="t" style="left:65.40px;top:6.80px;font-size:7.2px;color:#93aaf0;transform:translateX(-50%);">4</div><div class="t" style="left:4.20px;top:17.40px;font-size:8.2px;color:#9db2f2;letter-spacing:-.45px;-webkit-text-stroke:.2px #9db2f2;">AUX</div><div class="t" style="left:4.20px;top:28.40px;font-size:8.2px;color:#9db2f2;letter-spacing:-.45px;-webkit-text-stroke:.2px #9db2f2;">MXM</div><div class="t" style="left:4.20px;top:39.30px;font-size:8.2px;color:#9db2f2;letter-spacing:-.45px;-webkit-text-stroke:.2px #9db2f2;">PGM</div><svg class="a" style="left:0;top:0;filter:blur(.35px)" width="74" height="50" viewBox="0 0 74 50"><rect x="27.6" y="16.7" width="9.6" height="8.5" rx=".8" fill="url(#cd)"/><rect x="38.7" y="16.7" width="9.6" height="8.5" rx=".8" fill="url(#cd)"/><rect x="49.8" y="16.7" width="9.6" height="8.5" rx=".8" fill="url(#cd)"/><rect x="60.8" y="16.7" width="9.6" height="8.5" rx=".8" fill="url(#cd)"/><rect x="27.6" y="27.6" width="9.6" height="8.5" rx=".8" fill="url(#cd)"/><rect x="38.7" y="27.6" width="9.6" height="8.5" rx=".8" fill="url(#cd)"/><rect x="49.8" y="27.6" width="9.6" height="8.5" rx=".8" fill="url(#cd)"/><rect x="60.8" y="27.6" width="9.6" height="8.5" rx=".8" fill="url(#cd)"/><rect x="27.6" y="38.5" width="9.6" height="8.5" rx=".8" fill="url(#cd)"/><rect x="38.7" y="38.5" width="9.6" height="8.5" rx=".8" fill="url(#cd)"/><rect x="49.8" y="38.5" width="9.6" height="8.5" rx=".8" fill="url(#cd)"/><rect x="60.8" y="38.5" width="9.6" height="8.5" rx=".8" fill="url(#cd)"/></svg><div class="a" style="left:5.2px;top:53.8px;width:61px;height:4.8px;background:#1f6ad0;border-radius:1px"></div><div class="a" style="left:34.6px;top:52.2px;width:2.9px;height:8px;background:#f4f4f4;border-radius:1px"></div><div class="t" style="left:5.60px;top:62.20px;font-size:7px;color:#7f96e4;">L</div><div class="t" style="left:36.00px;top:62.00px;font-size:7px;color:#f2c81e;font-weight:bold;transform:translateX(-50%);letter-spacing:-.4px;">STEREO</div><div class="t" style="left:61.40px;top:62.20px;font-size:7px;color:#7f96e4;">R</div></div><div class="b" style="left:551.90px;top:240px"><span>PGM</span></div><div class="b" style="left:591.90px;top:240px"><span>AUD</span></div><div class="b" style="left:551.90px;top:277px"><span>AUX</span></div><div class="b" style="left:591.90px;top:277px"><span>OL</span></div><div class="pn" style="left:550.90px;top:316.2px;width:74.9px;height:73.6px"><div class="t" style="left:5.20px;top:5.60px;font-size:11.2px;color:#fff;letter-spacing:-.05px;-webkit-text-stroke:.3px #fff;">Traffic City</div><div class="t" style="left:5.40px;top:19.50px;font-size:9.4px;color:#7f90d4;letter-spacing:-.25px;-webkit-text-stroke:.2px #7f90d4;">BLD090</div><div class="a" style="left:7.6px;top:36.8px;width:60.8px;height:4.2px;background:linear-gradient(90deg,#0ec849 0.0%,#2bcf3e 30.0%,#2cd03d 30.0%,#8bd720 42.0%,#8cd81f 42.0%,#e7df0c 50.0%,#e8e00b 50.0%,#fee300 56.0%,#ffe300 56.0%,#ffe100 60.5%,#7f7000 60.5%,#7f6b00 77.0%,#ffe808 77.0%,#ffe808 80.0%,#70150c 80.0%,#5f0f0e 100.0%)"></div><div class="t" style="left:37.20px;top:47.80px;font-size:7.8px;color:#86a2ee;transform:translateX(-50%);letter-spacing:-.2px;-webkit-text-stroke:.25px #86a2ee;">GAIN: +12.0 dB</div></div><div class="b" style="left:551.90px;top:405px"><span>TB</span></div><div class="b" style="left:591.90px;top:405px"><span>CUE</span></div><svg class="a" style="left:563px;top:474px" width="62" height="238" viewBox="0 0 62 238"><g transform="translate(0.90 0.40)"><rect x="20.9" y="4.3" width="6" height="226.2" rx="3" fill="#000"/><g stroke="#fafafa" stroke-width="1.6"><path d="M9.2 16.0H20.9M26.9 16.0H38.2"/><path d="M9.2 38.1H20.9M26.9 38.1H38.2"/><path d="M9.2 58.0H20.9M26.9 58.0H38.2"/><path d="M9.2 78.3H20.9M26.9 78.3H38.2"/><path d="M9.2 97.9H20.9M26.9 97.9H38.2"/><path d="M9.2 118.8H20.9M26.9 118.8H38.2"/><path d="M9.2 140.9H20.9M26.9 140.9H38.2"/><path d="M9.2 156.3H20.9M26.9 156.3H38.2"/><path d="M9.2 171.8H20.9M26.9 171.8H38.2"/><path d="M9.2 186.7H20.9M26.9 186.7H38.2"/><path d="M9.2 200.5H20.9M26.9 200.5H38.2"/><path d="M9.2 216.6H20.9M26.9 216.6H38.2"/></g><path d="M5.6 64.7Q3.2 66.6 5.6 68.5L17 67.0V66.1Z" fill="#fff"/><path d="M42 64.7Q44.4 66.6 42 68.5L30.6 67.0V66.1Z" fill="#fff"/><g font-family="Liberation Sans, sans-serif" font-weight="bold" font-size="7.6" fill="#fff"><text x="42" y="18.4" textLength="4.9" lengthAdjust="spacingAndGlyphs">0</text><text x="42" y="40.5" textLength="4.9" lengthAdjust="spacingAndGlyphs">5</text><text x="39.8" y="60.4" textLength="9.9" lengthAdjust="spacingAndGlyphs">10</text><text x="39.8" y="80.6" textLength="9.9" lengthAdjust="spacingAndGlyphs">15</text><text x="39.8" y="100.2" textLength="9.9" lengthAdjust="spacingAndGlyphs">20</text><text x="39.8" y="121.1" textLength="9.9" lengthAdjust="spacingAndGlyphs">25</text><text x="39.8" y="143.2" textLength="9.9" lengthAdjust="spacingAndGlyphs">30</text><text x="39.8" y="158.7" textLength="9.9" lengthAdjust="spacingAndGlyphs">35</text><text x="39.8" y="174.2" textLength="9.9" lengthAdjust="spacingAndGlyphs">40</text><text x="39.8" y="189.0" textLength="9.9" lengthAdjust="spacingAndGlyphs">50</text><text x="39.8" y="202.8" textLength="9.9" lengthAdjust="spacingAndGlyphs">60</text><text x="39.6" y="218.8" font-size="8.4" textLength="10" lengthAdjust="spacingAndGlyphs">oo</text></g></g></svg><div class="cap" style="left:575.50px;top:639.80px"></div><div class="b w" style="left:559.40px;top:727px"><span>ON</span></div><div class="b w blue" style="left:559.40px;top:765px"><span>OFF</span></div>
<!-- channel 8 -->
<div class="k" style="left:658.55px;top:25.40px"><i></i></div><div class="b" style="left:642.55px;top:74px"><span>SET</span></div><div class="b" style="left:682.55px;top:74px"><span>MODE</span></div><div class="b" style="left:642.55px;top:112px"></div><div class="b" style="left:682.55px;top:112px"></div><div class="pn" style="left:641.85px;top:150.3px;width:73.6px;height:73.3px"><div class="t" style="left:3.00px;top:2.20px;font-size:9.5px;color:#a8bcf4;-webkit-text-stroke:.3px #a8bcf4;">8</div><div class="t" style="left:32.40px;top:6.80px;font-size:7.2px;color:#93aaf0;transform:translateX(-50%);">1</div><div class="t" style="left:43.30px;top:6.80px;font-size:7.2px;color:#93aaf0;transform:translateX(-50%);">2</div><div class="t" style="left:54.40px;top:6.80px;font-size:7.2px;color:#93aaf0;transform:translateX(-50%);">3</div><div class="t" style="left:65.40px;top:6.80px;font-size:7.2px;color:#93aaf0;transform:translateX(-50%);">4</div><div class="t" style="left:4.20px;top:17.40px;font-size:8.2px;color:#9db2f2;letter-spacing:-.45px;-webkit-text-stroke:.2px #9db2f2;">AUX</div><div class="t" style="left:4.20px;top:28.40px;font-size:8.2px;color:#9db2f2;letter-spacing:-.45px;-webkit-text-stroke:.2px #9db2f2;">MXM</div><div class="t" style="left:4.20px;top:39.30px;font-size:8.2px;color:#9db2f2;letter-spacing:-.45px;-webkit-text-stroke:.2px #9db2f2;">PGM</div><svg class="a" style="left:0;top:0;filter:blur(.35px)" width="74" height="50" viewBox="0 0 74 50"><rect x="27.6" y="16.7" width="9.6" height="8.5" rx=".8" fill="url(#cd)"/><rect x="38.7" y="16.7" width="9.6" height="8.5" rx=".8" fill="url(#cd)"/><rect x="49.8" y="16.7" width="9.6" height="8.5" rx=".8" fill="url(#cd)"/><rect x="60.8" y="16.7" width="9.6" height="8.5" rx=".8" fill="url(#cd)"/><rect x="27.6" y="27.6" width="9.6" height="8.5" rx=".8" fill="url(#cd)"/><rect x="38.7" y="27.6" width="9.6" height="8.5" rx=".8" fill="url(#cd)"/><rect x="49.8" y="27.6" width="9.6" height="8.5" rx=".8" fill="url(#cd)"/><rect x="60.8" y="27.6" width="9.6" height="8.5" rx=".8" fill="url(#cd)"/><rect x="27.6" y="38.5" width="9.6" height="8.5" rx=".8" fill="url(#cd)"/><rect x="38.7" y="38.5" width="9.6" height="8.5" rx=".8" fill="url(#cd)"/><rect x="49.8" y="38.5" width="9.6" height="8.5" rx=".8" fill="url(#cd)"/><rect x="60.8" y="38.5" width="9.6" height="8.5" rx=".8" fill="url(#cd)"/></svg><div class="a" style="left:5.2px;top:53.8px;width:61px;height:4.8px;background:#1f6ad0;border-radius:1px"></div><div class="a" style="left:34.6px;top:52.2px;width:2.9px;height:8px;background:#f4f4f4;border-radius:1px"></div><div class="t" style="left:5.60px;top:62.20px;font-size:7px;color:#7f96e4;">L</div><div class="t" style="left:36.00px;top:62.00px;font-size:7px;color:#f2c81e;font-weight:bold;transform:translateX(-50%);letter-spacing:-.4px;">STEREO</div><div class="t" style="left:61.40px;top:62.20px;font-size:7px;color:#7f96e4;">R</div></div><div class="b" style="left:642.55px;top:240px"><span>PGM</span></div><div class="b" style="left:682.55px;top:240px"><span>AUD</span></div><div class="b" style="left:642.55px;top:277px"><span>AUX</span></div><div class="b" style="left:682.55px;top:277px"><span>OL</span></div><div class="pn" style="left:641.70px;top:316.2px;width:74.9px;height:73.6px"><div class="t" style="left:5.20px;top:5.60px;font-size:11.2px;color:#fff;letter-spacing:-.05px;-webkit-text-stroke:.3px #fff;">Traffic Subs</div><div class="t" style="left:5.40px;top:19.50px;font-size:9.4px;color:#7f90d4;letter-spacing:-.25px;-webkit-text-stroke:.2px #7f90d4;">BLD011</div><div class="a" style="left:7.6px;top:36.8px;width:60.8px;height:4.2px;background:linear-gradient(90deg,#0ec849 0.0%,#2bcf3e 30.0%,#2cd03d 30.0%,#8bd720 42.0%,#8cd81f 42.0%,#e7df0c 50.0%,#e8e00b 50.0%,#fee300 56.0%,#ffe300 56.0%,#ffe100 60.5%,#7f7000 60.5%,#7f6b00 77.0%,#ffe808 77.0%,#ffe808 80.0%,#70150c 80.0%,#5f0f0e 100.0%)"></div><div class="t" style="left:37.20px;top:47.80px;font-size:7.8px;color:#86a2ee;transform:translateX(-50%);letter-spacing:-.2px;-webkit-text-stroke:.25px #86a2ee;">GAIN: +12.0 dB</div></div><div class="b" style="left:642.55px;top:405px"><span>TB</span></div><div class="b" style="left:682.55px;top:405px"><span>CUE</span></div><svg class="a" style="left:654px;top:474px" width="62" height="238" viewBox="0 0 62 238"><g transform="translate(0.55 0.40)"><rect x="20.9" y="4.3" width="6" height="226.2" rx="3" fill="#000"/><g stroke="#fafafa" stroke-width="1.6"><path d="M9.2 16.0H20.9M26.9 16.0H38.2"/><path d="M9.2 38.1H20.9M26.9 38.1H38.2"/><path d="M9.2 58.0H20.9M26.9 58.0H38.2"/><path d="M9.2 78.3H20.9M26.9 78.3H38.2"/><path d="M9.2 97.9H20.9M26.9 97.9H38.2"/><path d="M9.2 118.8H20.9M26.9 118.8H38.2"/><path d="M9.2 140.9H20.9M26.9 140.9H38.2"/><path d="M9.2 156.3H20.9M26.9 156.3H38.2"/><path d="M9.2 171.8H20.9M26.9 171.8H38.2"/><path d="M9.2 186.7H20.9M26.9 186.7H38.2"/><path d="M9.2 200.5H20.9M26.9 200.5H38.2"/><path d="M9.2 216.6H20.9M26.9 216.6H38.2"/></g><path d="M5.6 64.7Q3.2 66.6 5.6 68.5L17 67.0V66.1Z" fill="#fff"/><path d="M42 64.7Q44.4 66.6 42 68.5L30.6 67.0V66.1Z" fill="#fff"/><g font-family="Liberation Sans, sans-serif" font-weight="bold" font-size="7.6" fill="#fff"><text x="42" y="18.4" textLength="4.9" lengthAdjust="spacingAndGlyphs">0</text><text x="42" y="40.5" textLength="4.9" lengthAdjust="spacingAndGlyphs">5</text><text x="39.8" y="60.4" textLength="9.9" lengthAdjust="spacingAndGlyphs">10</text><text x="39.8" y="80.6" textLength="9.9" lengthAdjust="spacingAndGlyphs">15</text><text x="39.8" y="100.2" textLength="9.9" lengthAdjust="spacingAndGlyphs">20</text><text x="39.8" y="121.1" textLength="9.9" lengthAdjust="spacingAndGlyphs">25</text><text x="39.8" y="143.2" textLength="9.9" lengthAdjust="spacingAndGlyphs">30</text><text x="39.8" y="158.7" textLength="9.9" lengthAdjust="spacingAndGlyphs">35</text><text x="39.8" y="174.2" textLength="9.9" lengthAdjust="spacingAndGlyphs">40</text><text x="39.8" y="189.0" textLength="9.9" lengthAdjust="spacingAndGlyphs">50</text><text x="39.8" y="202.8" textLength="9.9" lengthAdjust="spacingAndGlyphs">60</text><text x="39.6" y="218.8" font-size="8.4" textLength="10" lengthAdjust="spacingAndGlyphs">oo</text></g></g></svg><div class="cap" style="left:666.15px;top:598.30px"></div><div class="b w" style="left:650.05px;top:727px"><span>ON</span></div><div class="b w blue" style="left:650.05px;top:765px"><span>OFF</span></div>
<!-- channel 9 -->
<div class="k" style="left:749.20px;top:25.40px"><i></i></div><div class="b" style="left:733.20px;top:74px"><span>SET</span></div><div class="b" style="left:773.20px;top:74px"><span>MODE</span></div><div class="b" style="left:733.20px;top:112px"></div><div class="b" style="left:773.20px;top:112px"></div><div class="pn" style="left:732.50px;top:150.3px;width:73.6px;height:73.3px"><div class="t" style="left:3.00px;top:2.20px;font-size:9.5px;color:#a8bcf4;-webkit-text-stroke:.3px #a8bcf4;">9</div><div class="t" style="left:32.40px;top:6.80px;font-size:7.2px;color:#93aaf0;transform:translateX(-50%);">1</div><div class="t" style="left:43.30px;top:6.80px;font-size:7.2px;color:#93aaf0;transform:translateX(-50%);">2</div><div class="t" style="left:54.40px;top:6.80px;font-size:7.2px;color:#93aaf0;transform:translateX(-50%);">3</div><div class="t" style="left:65.40px;top:6.80px;font-size:7.2px;color:#93aaf0;transform:translateX(-50%);">4</div><div class="t" style="left:4.20px;top:17.40px;font-size:8.2px;color:#9db2f2;letter-spacing:-.45px;-webkit-text-stroke:.2px #9db2f2;">AUX</div><div class="t" style="left:4.20px;top:28.40px;font-size:8.2px;color:#9db2f2;letter-spacing:-.45px;-webkit-text-stroke:.2px #9db2f2;">MXM</div><div class="t" style="left:4.20px;top:39.30px;font-size:8.2px;color:#9db2f2;letter-spacing:-.45px;-webkit-text-stroke:.2px #9db2f2;">PGM</div><svg class="a" style="left:0;top:0;filter:blur(.35px)" width="74" height="50" viewBox="0 0 74 50"><rect x="27.6" y="16.7" width="9.6" height="8.5" rx=".8" fill="url(#cd)"/><rect x="38.7" y="16.7" width="9.6" height="8.5" rx=".8" fill="url(#cd)"/><rect x="49.8" y="16.7" width="9.6" height="8.5" rx=".8" fill="url(#cd)"/><rect x="60.8" y="16.7" width="9.6" height="8.5" rx=".8" fill="url(#cd)"/><rect x="27.6" y="27.6" width="9.6" height="8.5" rx=".8" fill="url(#cd)"/><rect x="38.7" y="27.6" width="9.6" height="8.5" rx=".8" fill="url(#cd)"/><rect x="49.8" y="27.6" width="9.6" height="8.5" rx=".8" fill="url(#cd)"/><rect x="60.8" y="27.6" width="9.6" height="8.5" rx=".8" fill="url(#cd)"/><rect x="27.6" y="38.5" width="9.6" height="8.5" rx=".8" fill="url(#cd)"/><rect x="38.7" y="38.5" width="9.6" height="8.5" rx=".8" fill="url(#cd)"/><rect x="49.8" y="38.5" width="9.6" height="8.5" rx=".8" fill="url(#cd)"/><rect x="60.8" y="38.5" width="9.6" height="8.5" rx=".8" fill="url(#cd)"/></svg><div class="a" style="left:5.2px;top:53.8px;width:61px;height:4.8px;background:#1f6ad0;border-radius:1px"></div><div class="a" style="left:34.6px;top:52.2px;width:2.9px;height:8px;background:#f4f4f4;border-radius:1px"></div><div class="t" style="left:5.60px;top:62.20px;font-size:7px;color:#7f96e4;">L</div><div class="t" style="left:36.00px;top:62.00px;font-size:7px;color:#f2c81e;font-weight:bold;transform:translateX(-50%);letter-spacing:-.4px;">STEREO</div><div class="t" style="left:61.40px;top:62.20px;font-size:7px;color:#7f96e4;">R</div></div><div class="b" style="left:733.20px;top:240px"><span>PGM</span></div><div class="b" style="left:773.20px;top:240px"><span>AUD</span></div><div class="b" style="left:733.20px;top:277px"><span>AUX</span></div><div class="b" style="left:773.20px;top:277px"><span>OL</span></div><div class="pn" style="left:732.50px;top:316.2px;width:74.9px;height:73.6px"><div class="t" style="left:5.20px;top:5.60px;font-size:11.2px;color:#fff;letter-spacing:-.05px;-webkit-text-stroke:.3px #fff;">Remote 1</div><div class="t" style="left:5.40px;top:19.50px;font-size:9.4px;color:#7f90d4;letter-spacing:-.25px;-webkit-text-stroke:.2px #7f90d4;">BLD013</div><div class="a" style="left:7.6px;top:36.8px;width:60.8px;height:4.2px;background:linear-gradient(90deg,#0ec849 0.0%,#2bcf3e 30.0%,#2cd03d 30.0%,#8bd720 42.0%,#8cd81f 42.0%,#e7df0c 50.0%,#e8e00b 50.0%,#fee300 56.0%,#ffe300 56.0%,#ffe100 60.5%,#7f7000 60.5%,#7f6b00 77.0%,#ffe808 77.0%,#ffe808 80.0%,#70150c 80.0%,#5f0f0e 100.0%)"></div><div class="t" style="left:37.20px;top:47.80px;font-size:7.8px;color:#86a2ee;transform:translateX(-50%);letter-spacing:-.2px;-webkit-text-stroke:.25px #86a2ee;">GAIN: +12.0 dB</div></div><div class="b" style="left:733.20px;top:405px"><span>TB</span></div><div class="b" style="left:773.20px;top:405px"><span>CUE</span></div><svg class="a" style="left:745px;top:474px" width="62" height="238" viewBox="0 0 62 238"><g transform="translate(0.20 0.40)"><rect x="20.9" y="4.3" width="6" height="226.2" rx="3" fill="#000"/><g stroke="#fafafa" stroke-width="1.6"><path d="M9.2 16.0H20.9M26.9 16.0H38.2"/><path d="M9.2 38.1H20.9M26.9 38.1H38.2"/><path d="M9.2 58.0H20.9M26.9 58.0H38.2"/><path d="M9.2 78.3H20.9M26.9 78.3H38.2"/><path d="M9.2 97.9H20.9M26.9 97.9H38.2"/><path d="M9.2 118.8H20.9M26.9 118.8H38.2"/><path d="M9.2 140.9H20.9M26.9 140.9H38.2"/><path d="M9.2 156.3H20.9M26.9 156.3H38.2"/><path d="M9.2 171.8H20.9M26.9 171.8H38.2"/><path d="M9.2 186.7H20.9M26.9 186.7H38.2"/><path d="M9.2 200.5H20.9M26.9 200.5H38.2"/><path d="M9.2 216.6H20.9M26.9 216.6H38.2"/></g><path d="M5.6 64.7Q3.2 66.6 5.6 68.5L17 67.0V66.1Z" fill="#fff"/><path d="M42 64.7Q44.4 66.6 42 68.5L30.6 67.0V66.1Z" fill="#fff"/><g font-family="Liberation Sans, sans-serif" font-weight="bold" font-size="7.6" fill="#fff"><text x="42" y="18.4" textLength="4.9" lengthAdjust="spacingAndGlyphs">0</text><text x="42" y="40.5" textLength="4.9" lengthAdjust="spacingAndGlyphs">5</text><text x="39.8" y="60.4" textLength="9.9" lengthAdjust="spacingAndGlyphs">10</text><text x="39.8" y="80.6" textLength="9.9" lengthAdjust="spacingAndGlyphs">15</text><text x="39.8" y="100.2" textLength="9.9" lengthAdjust="spacingAndGlyphs">20</text><text x="39.8" y="121.1" textLength="9.9" lengthAdjust="spacingAndGlyphs">25</text><text x="39.8" y="143.2" textLength="9.9" lengthAdjust="spacingAndGlyphs">30</text><text x="39.8" y="158.7" textLength="9.9" lengthAdjust="spacingAndGlyphs">35</text><text x="39.8" y="174.2" textLength="9.9" lengthAdjust="spacingAndGlyphs">40</text><text x="39.8" y="189.0" textLength="9.9" lengthAdjust="spacingAndGlyphs">50</text><text x="39.8" y="202.8" textLength="9.9" lengthAdjust="spacingAndGlyphs">60</text><text x="39.6" y="218.8" font-size="8.4" textLength="10" lengthAdjust="spacingAndGlyphs">oo</text></g></g></svg><div class="cap" style="left:756.80px;top:467.30px"></div><div class="b w" style="left:740.70px;top:727px"><span>ON</span></div><div class="b w blue" style="left:740.70px;top:765px"><span>OFF</span></div>
<!-- channel 10 -->
<div class="k sel" style="left:841.55px;top:27.10px"><i></i></div><div class="b" style="left:823.85px;top:74px"><span>SET</span></div><div class="b" style="left:863.85px;top:74px"><span>MODE</span></div><div class="b" style="left:823.85px;top:112px"></div><div class="b" style="left:863.85px;top:112px"></div><div class="pn" style="left:823.15px;top:150.3px;width:73.6px;height:73.3px"><div class="t" style="left:3.00px;top:2.20px;font-size:9.5px;color:#a8bcf4;-webkit-text-stroke:.3px #a8bcf4;">10</div><div class="t" style="left:32.40px;top:6.80px;font-size:7.2px;color:#93aaf0;transform:translateX(-50%);">1</div><div class="t" style="left:43.30px;top:6.80px;font-size:7.2px;color:#93aaf0;transform:translateX(-50%);">2</div><div class="t" style="left:54.40px;top:6.80px;font-size:7.2px;color:#93aaf0;transform:translateX(-50%);">3</div><div class="t" style="left:65.40px;top:6.80px;font-size:7.2px;color:#93aaf0;transform:translateX(-50%);">4</div><div class="t" style="left:4.20px;top:17.40px;font-size:8.2px;color:#9db2f2;letter-spacing:-.45px;-webkit-text-stroke:.2px #9db2f2;">AUX</div><div class="t" style="left:4.20px;top:28.40px;font-size:8.2px;color:#9db2f2;letter-spacing:-.45px;-webkit-text-stroke:.2px #9db2f2;">MXM</div><div class="t" style="left:4.20px;top:39.30px;font-size:8.2px;color:#9db2f2;letter-spacing:-.45px;-webkit-text-stroke:.2px #9db2f2;">PGM</div><svg class="a" style="left:0;top:0;filter:blur(.35px)" width="74" height="50" viewBox="0 0 74 50"><rect x="27.6" y="16.7" width="9.6" height="8.5" rx=".8" fill="url(#cd)"/><rect x="38.7" y="16.7" width="9.6" height="8.5" rx=".8" fill="url(#cd)"/><rect x="49.8" y="16.7" width="9.6" height="8.5" rx=".8" fill="url(#cd)"/><rect x="60.8" y="16.7" width="9.6" height="8.5" rx=".8" fill="url(#cd)"/><rect x="27.6" y="27.6" width="9.6" height="8.5" rx=".8" fill="url(#cd)"/><rect x="38.7" y="27.6" width="9.6" height="8.5" rx=".8" fill="url(#cd)"/><rect x="49.8" y="27.6" width="9.6" height="8.5" rx=".8" fill="url(#cd)"/><rect x="60.8" y="27.6" width="9.6" height="8.5" rx=".8" fill="url(#cd)"/><rect x="27.6" y="38.5" width="9.6" height="8.5" rx=".8" fill="url(#cd)"/><rect x="38.7" y="38.5" width="9.6" height="8.5" rx=".8" fill="url(#cd)"/><rect x="49.8" y="38.5" width="9.6" height="8.5" rx=".8" fill="url(#cd)"/><rect x="60.8" y="38.5" width="9.6" height="8.5" rx=".8" fill="url(#cd)"/></svg><div class="a" style="left:5.2px;top:53.8px;width:61px;height:4.8px;background:#1f6ad0;border-radius:1px"></div><div class="a" style="left:34.6px;top:52.2px;width:2.9px;height:8px;background:#f4f4f4;border-radius:1px"></div><div class="t" style="left:5.60px;top:62.20px;font-size:7px;color:#7f96e4;">L</div><div class="t" style="left:36.00px;top:62.00px;font-size:7px;color:#f2c81e;font-weight:bold;transform:translateX(-50%);letter-spacing:-.4px;">STEREO</div><div class="t" style="left:61.40px;top:62.20px;font-size:7px;color:#7f96e4;">R</div></div><div class="b" style="left:823.85px;top:240px"><span>PGM</span></div><div class="b" style="left:863.85px;top:240px"><span>AUD</span></div><div class="b" style="left:823.85px;top:277px"><span>AUX</span></div><div class="b" style="left:863.85px;top:277px"><span>OL</span></div><div class="pn" style="left:823.30px;top:316.2px;width:74.9px;height:73.6px"><div class="t" style="left:5.20px;top:5.60px;font-size:11.2px;color:#fff;letter-spacing:-.05px;-webkit-text-stroke:.3px #fff;">Remote 2</div><div class="t" style="left:5.40px;top:19.50px;font-size:9.4px;color:#7f90d4;letter-spacing:-.25px;-webkit-text-stroke:.2px #7f90d4;">BLD013</div><div class="a" style="left:7.6px;top:36.8px;width:60.8px;height:4.2px;background:linear-gradient(90deg,#0ec849 0.0%,#2bcf3e 30.0%,#2cd03d 30.0%,#8bd720 42.0%,#8cd81f 42.0%,#e7df0c 50.0%,#e8e00b 50.0%,#fee300 56.0%,#ffe300 56.0%,#ffe100 60.5%,#7f7000 60.5%,#7f6b00 77.0%,#ffe808 77.0%,#ffe808 80.0%,#70150c 80.0%,#5f0f0e 100.0%)"></div><div class="t" style="left:37.20px;top:47.80px;font-size:7.8px;color:#86a2ee;transform:translateX(-50%);letter-spacing:-.2px;-webkit-text-stroke:.25px #86a2ee;">GAIN: +12.0 dB</div></div><div class="b" style="left:823.85px;top:405px"><span>TB</span></div><div class="b" style="left:863.85px;top:405px"><span>CUE</span></div><svg class="a" style="left:835px;top:474px" width="62" height="238" viewBox="0 0 62 238"><g transform="translate(0.85 0.40)"><rect x="20.9" y="4.3" width="6" height="226.2" rx="3" fill="#000"/><g stroke="#fafafa" stroke-width="1.6"><path d="M9.2 16.0H20.9M26.9 16.0H38.2"/><path d="M9.2 38.1H20.9M26.9 38.1H38.2"/><path d="M9.2 58.0H20.9M26.9 58.0H38.2"/><path d="M9.2 78.3H20.9M26.9 78.3H38.2"/><path d="M9.2 97.9H20.9M26.9 97.9H38.2"/><path d="M9.2 118.8H20.9M26.9 118.8H38.2"/><path d="M9.2 140.9H20.9M26.9 140.9H38.2"/><path d="M9.2 156.3H20.9M26.9 156.3H38.2"/><path d="M9.2 171.8H20.9M26.9 171.8H38.2"/><path d="M9.2 186.7H20.9M26.9 186.7H38.2"/><path d="M9.2 200.5H20.9M26.9 200.5H38.2"/><path d="M9.2 216.6H20.9M26.9 216.6H38.2"/></g><path d="M5.6 64.7Q3.2 66.6 5.6 68.5L17 67.0V66.1Z" fill="#fff"/><path d="M42 64.7Q44.4 66.6 42 68.5L30.6 67.0V66.1Z" fill="#fff"/><g font-family="Liberation Sans, sans-serif" font-weight="bold" font-size="7.6" fill="#fff"><text x="42" y="18.4" textLength="4.9" lengthAdjust="spacingAndGlyphs">0</text><text x="42" y="40.5" textLength="4.9" lengthAdjust="spacingAndGlyphs">5</text><text x="39.8" y="60.4" textLength="9.9" lengthAdjust="spacingAndGlyphs">10</text><text x="39.8" y="80.6" textLength="9.9" lengthAdjust="spacingAndGlyphs">15</text><text x="39.8" y="100.2" textLength="9.9" lengthAdjust="spacingAndGlyphs">20</text><text x="39.8" y="121.1" textLength="9.9" lengthAdjust="spacingAndGlyphs">25</text><text x="39.8" y="143.2" textLength="9.9" lengthAdjust="spacingAndGlyphs">30</text><text x="39.8" y="158.7" textLength="9.9" lengthAdjust="spacingAndGlyphs">35</text><text x="39.8" y="174.2" textLength="9.9" lengthAdjust="spacingAndGlyphs">40</text><text x="39.8" y="189.0" textLength="9.9" lengthAdjust="spacingAndGlyphs">50</text><text x="39.8" y="202.8" textLength="9.9" lengthAdjust="spacingAndGlyphs">60</text><text x="39.6" y="218.8" font-size="8.4" textLength="10" lengthAdjust="spacingAndGlyphs">oo</text></g></g></svg><div class="cap" style="left:847.45px;top:467.30px"></div><div class="b w" style="left:831.35px;top:727px"><span>ON</span></div><div class="b w blue" style="left:831.35px;top:765px"><span>OFF</span></div>
<!-- channel 11 -->
<div class="k" style="left:930.50px;top:25.40px"><i></i></div><div class="b" style="left:914.50px;top:74px"><span>SET</span></div><div class="b" style="left:954.50px;top:74px"><span>MODE</span></div><div class="b" style="left:914.50px;top:112px"></div><div class="b" style="left:954.50px;top:112px"></div><div class="pn" style="left:913.80px;top:150.3px;width:73.6px;height:73.3px"><div class="t" style="left:3.00px;top:2.20px;font-size:9.5px;color:#a8bcf4;-webkit-text-stroke:.3px #a8bcf4;">11</div><div class="t" style="left:32.40px;top:6.80px;font-size:7.2px;color:#93aaf0;transform:translateX(-50%);">1</div><div class="t" style="left:43.30px;top:6.80px;font-size:7.2px;color:#93aaf0;transform:translateX(-50%);">2</div><div class="t" style="left:54.40px;top:6.80px;font-size:7.2px;color:#93aaf0;transform:translateX(-50%);">3</div><div class="t" style="left:65.40px;top:6.80px;font-size:7.2px;color:#93aaf0;transform:translateX(-50%);">4</div><div class="t" style="left:4.20px;top:17.40px;font-size:8.2px;color:#9db2f2;letter-spacing:-.45px;-webkit-text-stroke:.2px #9db2f2;">AUX</div><div class="t" style="left:4.20px;top:28.40px;font-size:8.2px;color:#9db2f2;letter-spacing:-.45px;-webkit-text-stroke:.2px #9db2f2;">MXM</div><div class="t" style="left:4.20px;top:39.30px;font-size:8.2px;color:#9db2f2;letter-spacing:-.45px;-webkit-text-stroke:.2px #9db2f2;">PGM</div><svg class="a" style="left:0;top:0;filter:blur(.35px)" width="74" height="50" viewBox="0 0 74 50"><rect x="27.6" y="16.7" width="9.6" height="8.5" rx=".8" fill="url(#cd)"/><rect x="38.7" y="16.7" width="9.6" height="8.5" rx=".8" fill="url(#cd)"/><rect x="49.8" y="16.7" width="9.6" height="8.5" rx=".8" fill="url(#cd)"/><rect x="60.8" y="16.7" width="9.6" height="8.5" rx=".8" fill="url(#cd)"/><rect x="27.6" y="27.6" width="9.6" height="8.5" rx=".8" fill="url(#cd)"/><rect x="38.7" y="27.6" width="9.6" height="8.5" rx=".8" fill="url(#cd)"/><rect x="49.8" y="27.6" width="9.6" height="8.5" rx=".8" fill="url(#cd)"/><rect x="60.8" y="27.6" width="9.6" height="8.5" rx=".8" fill="url(#cd)"/><rect x="27.6" y="38.5" width="9.6" height="8.5" rx=".8" fill="url(#cd)"/><rect x="38.7" y="38.5" width="9.6" height="8.5" rx=".8" fill="url(#cd)"/><rect x="49.8" y="38.5" width="9.6" height="8.5" rx=".8" fill="url(#cd)"/><rect x="60.8" y="38.5" width="9.6" height="8.5" rx=".8" fill="url(#cd)"/></svg><div class="a" style="left:5.2px;top:53.8px;width:61px;height:4.8px;background:#1f6ad0;border-radius:1px"></div><div class="a" style="left:34.6px;top:52.2px;width:2.9px;height:8px;background:#f4f4f4;border-radius:1px"></div><div class="t" style="left:5.60px;top:62.20px;font-size:7px;color:#7f96e4;">L</div><div class="t" style="left:36.00px;top:62.00px;font-size:7px;color:#f2c81e;font-weight:bold;transform:translateX(-50%);letter-spacing:-.4px;">STEREO</div><div class="t" style="left:61.40px;top:62.20px;font-size:7px;color:#7f96e4;">R</div></div><div class="b" style="left:914.50px;top:240px"><span>PGM</span></div><div class="b" style="left:954.50px;top:240px"><span>AUD</span></div><div class="b" style="left:914.50px;top:277px"><span>AUX</span></div><div class="b" style="left:954.50px;top:277px"><span>OL</span></div><div class="pn" style="left:914.10px;top:316.2px;width:74.9px;height:73.6px"><div class="t" style="left:5.20px;top:5.60px;font-size:11.2px;color:#fff;letter-spacing:-.05px;-webkit-text-stroke:.3px #fff;">Remote 3</div><div class="t" style="left:5.40px;top:19.50px;font-size:9.4px;color:#7f90d4;letter-spacing:-.25px;-webkit-text-stroke:.2px #7f90d4;">BLD013</div><div class="a" style="left:7.6px;top:36.8px;width:60.8px;height:4.2px;background:linear-gradient(90deg,#0ec849 0.0%,#2bcf3e 30.0%,#2cd03d 30.0%,#8bd720 42.0%,#8cd81f 42.0%,#e7df0c 50.0%,#e8e00b 50.0%,#fee300 56.0%,#ffe300 56.0%,#ffe100 60.5%,#7f7000 60.5%,#7f6b00 77.0%,#ffe808 77.0%,#ffe808 80.0%,#70150c 80.0%,#5f0f0e 100.0%)"></div><div class="t" style="left:37.20px;top:47.80px;font-size:7.8px;color:#86a2ee;transform:translateX(-50%);letter-spacing:-.2px;-webkit-text-stroke:.25px #86a2ee;">GAIN: +12.0 dB</div></div><div class="b" style="left:914.50px;top:405px"><span>TB</span></div><div class="b" style="left:954.50px;top:405px"><span>CUE</span></div><svg class="a" style="left:926px;top:474px" width="62" height="238" viewBox="0 0 62 238"><g transform="translate(0.50 0.40)"><rect x="20.9" y="4.3" width="6" height="226.2" rx="3" fill="#000"/><g stroke="#fafafa" stroke-width="1.6"><path d="M9.2 16.0H20.9M26.9 16.0H38.2"/><path d="M9.2 38.1H20.9M26.9 38.1H38.2"/><path d="M9.2 58.0H20.9M26.9 58.0H38.2"/><path d="M9.2 78.3H20.9M26.9 78.3H38.2"/><path d="M9.2 97.9H20.9M26.9 97.9H38.2"/><path d="M9.2 118.8H20.9M26.9 118.8H38.2"/><path d="M9.2 140.9H20.9M26.9 140.9H38.2"/><path d="M9.2 156.3H20.9M26.9 156.3H38.2"/><path d="M9.2 171.8H20.9M26.9 171.8H38.2"/><path d="M9.2 186.7H20.9M26.9 186.7H38.2"/><path d="M9.2 200.5H20.9M26.9 200.5H38.2"/><path d="M9.2 216.6H20.9M26.9 216.6H38.2"/></g><path d="M5.6 64.7Q3.2 66.6 5.6 68.5L17 67.0V66.1Z" fill="#fff"/><path d="M42 64.7Q44.4 66.6 42 68.5L30.6 67.0V66.1Z" fill="#fff"/><g font-family="Liberation Sans, sans-serif" font-weight="bold" font-size="7.6" fill="#fff"><text x="42" y="18.4" textLength="4.9" lengthAdjust="spacingAndGlyphs">0</text><text x="42" y="40.5" textLength="4.9" lengthAdjust="spacingAndGlyphs">5</text><text x="39.8" y="60.4" textLength="9.9" lengthAdjust="spacingAndGlyphs">10</text><text x="39.8" y="80.6" textLength="9.9" lengthAdjust="spacingAndGlyphs">15</text><text x="39.8" y="100.2" textLength="9.9" lengthAdjust="spacingAndGlyphs">20</text><text x="39.8" y="121.1" textLength="9.9" lengthAdjust="spacingAndGlyphs">25</text><text x="39.8" y="143.2" textLength="9.9" lengthAdjust="spacingAndGlyphs">30</text><text x="39.8" y="158.7" textLength="9.9" lengthAdjust="spacingAndGlyphs">35</text><text x="39.8" y="174.2" textLength="9.9" lengthAdjust="spacingAndGlyphs">40</text><text x="39.8" y="189.0" textLength="9.9" lengthAdjust="spacingAndGlyphs">50</text><text x="39.8" y="202.8" textLength="9.9" lengthAdjust="spacingAndGlyphs">60</text><text x="39.6" y="218.8" font-size="8.4" textLength="10" lengthAdjust="spacingAndGlyphs">oo</text></g></g></svg><div class="cap" style="left:938.10px;top:467.30px"></div><div class="b w" style="left:922.00px;top:727px"><span>ON</span></div><div class="b w blue" style="left:922.00px;top:765px"><span>OFF</span></div>
<!-- master 1 -->
<div class="k" style="left:1021.15px;top:25.40px"><i></i></div><div class="b" style="left:1005.15px;top:74px"><span>MXM1</span></div><div class="b" style="left:1045.15px;top:74px"><span>MXM2</span></div><div class="b" style="left:1005.15px;top:112px"><span>MXM3</span></div><div class="b" style="left:1045.15px;top:112px"><span>MXM4</span></div><div class="pn" style="left:1004.25px;top:150.3px;width:73.8px;height:73.2px"><div class="t" style="left:37.00px;top:5.70px;font-size:11.8px;color:#f79a2a;font-weight:bold;transform:translateX(-50%) scaleX(0.86);">AUX 1</div><div class="t" style="left:37.00px;top:19.30px;font-size:8.6px;color:#f79a2a;font-weight:bold;transform:translateX(-50%) scaleX(0.8);">MASTER</div><svg class="a" style="left:0;top:0" width="74" height="73" viewBox="0 0 74 73"><defs><linearGradient id="g11y" x1="7.0" x2="43.6" y1="0" y2="0" gradientUnits="userSpaceOnUse"><stop offset="0" stop-color="#fff424"/><stop offset=".5" stop-color="#ffdc28"/><stop offset="1" stop-color="#fca824"/></linearGradient><linearGradient id="g11b" x1="40.8" x2="67.2" y1="0" y2="0" gradientUnits="userSpaceOnUse"><stop offset="0" stop-color="#4a70bc"/><stop offset=".5" stop-color="#364e90"/><stop offset="1" stop-color="#28305e"/></linearGradient></defs><path d="M7.0 64.6A30.1 30.1 0 0 1 43.61 35.21L40.76 48.10A16.9 16.9 0 0 0 20.200000000000003 64.6Z" fill="url(#g11y)"/><path d="M43.61 35.21A30.1 30.1 0 0 1 67.2 64.6H54.0A16.9 16.9 0 0 0 40.76 48.10Z" fill="url(#g11b)"/></svg><div class="t" style="left:37.10px;top:59.20px;font-size:7.2px;color:#f79a2a;font-weight:bold;transform:translateX(-50%) scaleX(0.88);">-8.4 dB</div></div><div class="k" style="left:1021.15px;top:231.50px"><i></i></div><div class="b" style="left:1005.15px;top:277px"><span>CUE<br>CLR</span></div><div class="b" style="left:1045.15px;top:277px"></div><div class="pn" style="left:1004.35px;top:316.10px;width:75.4px;height:74.2px;background:#242422"><div class="a" style="left:0;top:0;width:100%;height:8.6px;background:#2c2c2a"></div><div class="t" style="left:37.70px;top:0.60px;font-size:8.2px;color:#7f9cec;font-weight:bold;transform:translateX(-50%);letter-spacing:-.35px;">MONITOR 1</div><div class="a" style="left:0;top:9px;width:100%;height:1px;background:#41599e"></div><div class="t" style="left:5.60px;top:12.20px;font-size:10.6px;color:#fff;font-weight:bold;letter-spacing:-.7px;">BL006S04</div><div class="t" style="left:5.60px;top:25.00px;font-size:9.2px;color:#7790e6;font-weight:bold;letter-spacing:-.35px;">Blade06</div><svg class="a" style="left:6.6px;top:47.6px" width="7" height="8" viewBox="0 0 7 8"><path d="M0 2.6H2L5.4 0V8L2 5.4H0Z" fill="#7f9cec"/></svg><div class="a" style="left:16.15px;top:48.8px;width:24.30px;height:5px;background:#ffe81a"></div><div class="a" style="left:40.45px;top:48.8px;width:29.40px;height:5px;background:#1f6ad0"></div><div class="a" style="left:39.45px;top:47.6px;width:2.4px;height:7.4px;background:#f4f4f4;border-radius:1px"></div><div class="a" style="left:0;top:64.6px;width:100%;height:1px;background:#3a539a"></div><div class="a" style="left:0;top:66.4px;width:100%;height:7.8px;background:#2e2e2c"></div></div><div class="b" style="left:1005.15px;top:405px"><span>SET</span></div><div class="b" style="left:1045.15px;top:405px"></div><div class="b" style="left:1005.15px;top:444px"><span>EXT1</span></div><div class="b" style="left:1045.15px;top:444px"><span>EXT2</span></div><div class="b" style="left:1005.15px;top:486px"><span>PGM</span></div><div class="b" style="left:1045.15px;top:486px"><span>AUD</span></div><div class="b" style="left:1005.15px;top:523px"><span>AUX</span></div><div class="b" style="left:1045.15px;top:523px"><span>OL</span></div><svg class="a" style="left:1017px;top:562px" width="62" height="238" viewBox="0 0 62 238"><g transform="translate(0.15 0.40)"><rect x="20.9" y="4.3" width="6" height="226.2" rx="3" fill="#000"/><g stroke="#fafafa" stroke-width="1.6"><path d="M9.2 16.0H20.9M26.9 16.0H38.2"/><path d="M9.2 38.1H20.9M26.9 38.1H38.2"/><path d="M9.2 58.0H20.9M26.9 58.0H38.2"/><path d="M9.2 78.3H20.9M26.9 78.3H38.2"/><path d="M9.2 97.9H20.9M26.9 97.9H38.2"/><path d="M9.2 118.8H20.9M26.9 118.8H38.2"/><path d="M9.2 140.9H20.9M26.9 140.9H38.2"/><path d="M9.2 156.3H20.9M26.9 156.3H38.2"/><path d="M9.2 171.8H20.9M26.9 171.8H38.2"/><path d="M9.2 186.7H20.9M26.9 186.7H38.2"/><path d="M9.2 200.5H20.9M26.9 200.5H38.2"/><path d="M9.2 216.6H20.9M26.9 216.6H38.2"/></g><path d="M5.6 64.7Q3.2 66.6 5.6 68.5L17 67.0V66.1Z" fill="#fff"/><path d="M42 64.7Q44.4 66.6 42 68.5L30.6 67.0V66.1Z" fill="#fff"/><g font-family="Liberation Sans, sans-serif" font-weight="bold" font-size="7.6" fill="#fff"><text x="42" y="18.4" textLength="4.9" lengthAdjust="spacingAndGlyphs">0</text><text x="42" y="40.5" textLength="4.9" lengthAdjust="spacingAndGlyphs">5</text><text x="39.8" y="60.4" textLength="9.9" lengthAdjust="spacingAndGlyphs">10</text><text x="39.8" y="80.6" textLength="9.9" lengthAdjust="spacingAndGlyphs">15</text><text x="39.8" y="100.2" textLength="9.9" lengthAdjust="spacingAndGlyphs">20</text><text x="39.8" y="121.1" textLength="9.9" lengthAdjust="spacingAndGlyphs">25</text><text x="39.8" y="143.2" textLength="9.9" lengthAdjust="spacingAndGlyphs">30</text><text x="39.8" y="158.7" textLength="9.9" lengthAdjust="spacingAndGlyphs">35</text><text x="39.8" y="174.2" textLength="9.9" lengthAdjust="spacingAndGlyphs">40</text><text x="39.8" y="189.0" textLength="9.9" lengthAdjust="spacingAndGlyphs">50</text><text x="39.8" y="202.8" textLength="9.9" lengthAdjust="spacingAndGlyphs">60</text><text x="39.6" y="218.8" font-size="8.4" textLength="10" lengthAdjust="spacingAndGlyphs">oo</text></g></g></svg><div class="cap" style="left:1028.75px;top:686.40px"></div>
<!-- master 2 -->
<div class="k" style="left:1111.80px;top:25.40px"><i></i></div><div class="b" style="left:1095.80px;top:74px"><span>MXM1<br>TB</span></div><div class="b" style="left:1135.80px;top:74px"><span>MXM2<br>TB</span></div><div class="b" style="left:1095.80px;top:112px"><span>MXM3<br>TB</span></div><div class="b" style="left:1135.80px;top:112px"><span>MXM4<br>TB</span></div><div class="pn" style="left:1094.90px;top:150.3px;width:73.8px;height:73.2px"><div class="t" style="left:37.00px;top:5.70px;font-size:11.8px;color:#f79a2a;font-weight:bold;transform:translateX(-50%) scaleX(0.86);">AUX 2</div><div class="t" style="left:37.00px;top:19.30px;font-size:8.6px;color:#f79a2a;font-weight:bold;transform:translateX(-50%) scaleX(0.8);">MASTER</div><svg class="a" style="left:0;top:0" width="74" height="73" viewBox="0 0 74 73"><defs><linearGradient id="g12y" x1="7.0" x2="37.4" y1="0" y2="0" gradientUnits="userSpaceOnUse"><stop offset="0" stop-color="#fff424"/><stop offset=".5" stop-color="#ffdc28"/><stop offset="1" stop-color="#fca824"/></linearGradient><linearGradient id="g12b" x1="37.2" x2="67.2" y1="0" y2="0" gradientUnits="userSpaceOnUse"><stop offset="0" stop-color="#4a70bc"/><stop offset=".5" stop-color="#364e90"/><stop offset="1" stop-color="#28305e"/></linearGradient></defs><path d="M7.0 64.6A30.1 30.1 0 0 1 37.36 34.50L37.25 47.70A16.9 16.9 0 0 0 20.200000000000003 64.6Z" fill="url(#g12y)"/><path d="M37.36 34.50A30.1 30.1 0 0 1 67.2 64.6H54.0A16.9 16.9 0 0 0 37.25 47.70Z" fill="url(#g12b)"/></svg><div class="t" style="left:37.10px;top:59.20px;font-size:7.2px;color:#f79a2a;font-weight:bold;transform:translateX(-50%) scaleX(0.88);">-11.6 dB</div></div><div class="k" style="left:1111.80px;top:231.50px"><i></i></div><div class="b" style="left:1095.80px;top:277px"><span>LOUD<br>S/S</span></div><div class="b" style="left:1135.80px;top:277px"><span>LOUD<br>RST</span></div><div class="pn" style="left:1095.00px;top:316.10px;width:75.4px;height:74.2px;background:#242422"><div class="a" style="left:0;top:0;width:100%;height:8.6px;background:#2c2c2a"></div><div class="t" style="left:37.70px;top:0.60px;font-size:8.2px;color:#7f9cec;font-weight:bold;transform:translateX(-50%);letter-spacing:-.35px;">MONITOR 2</div><div class="a" style="left:0;top:9px;width:100%;height:1px;background:#41599e"></div><div class="t" style="left:5.60px;top:12.20px;font-size:10.6px;color:#fff;font-weight:bold;letter-spacing:-.7px;">BL006S04</div><div class="t" style="left:5.60px;top:25.00px;font-size:9.2px;color:#7790e6;font-weight:bold;letter-spacing:-.35px;">Blade06</div><svg class="a" style="left:6.6px;top:47.6px" width="7" height="8" viewBox="0 0 7 8"><path d="M0 2.6H2L5.4 0V8L2 5.4H0Z" fill="#7f9cec"/></svg><div class="a" style="left:14.80px;top:48.8px;width:23.80px;height:5px;background:#ffe81a"></div><div class="a" style="left:38.60px;top:48.8px;width:30.00px;height:5px;background:#1f6ad0"></div><div class="a" style="left:37.60px;top:47.6px;width:2.4px;height:7.4px;background:#f4f4f4;border-radius:1px"></div><div class="a" style="left:0;top:64.6px;width:100%;height:1px;background:#3a539a"></div><div class="a" style="left:0;top:66.4px;width:100%;height:7.8px;background:#2e2e2c"></div></div><div class="b" style="left:1095.80px;top:405px"><span class="ar">&#8593;</span></div><div class="b" style="left:1135.80px;top:405px"><span class="ar">&#8595;</span></div><div class="b" style="left:1095.80px;top:444px"><span>AUTO</span></div><div class="b" style="left:1135.80px;top:444px"><span>S/S</span></div><div class="b" style="left:1095.80px;top:486px"><span>HOLD</span></div><div class="b" style="left:1135.80px;top:486px"><span class="n">RESET</span></div><div class="b red" style="left:1095.80px;top:523px"><span>UP/<br>DOWN</span></div><div class="b" style="left:1135.80px;top:523px"></div><svg class="a" style="left:1107px;top:562px" width="62" height="238" viewBox="0 0 62 238"><g transform="translate(0.80 0.40)"><rect x="20.9" y="4.3" width="6" height="226.2" rx="3" fill="#000"/><g stroke="#fafafa" stroke-width="1.6"><path d="M9.2 16.0H20.9M26.9 16.0H38.2"/><path d="M9.2 38.1H20.9M26.9 38.1H38.2"/><path d="M9.2 58.0H20.9M26.9 58.0H38.2"/><path d="M9.2 78.3H20.9M26.9 78.3H38.2"/><path d="M9.2 97.9H20.9M26.9 97.9H38.2"/><path d="M9.2 118.8H20.9M26.9 118.8H38.2"/><path d="M9.2 140.9H20.9M26.9 140.9H38.2"/><path d="M9.2 156.3H20.9M26.9 156.3H38.2"/><path d="M9.2 171.8H20.9M26.9 171.8H38.2"/><path d="M9.2 186.7H20.9M26.9 186.7H38.2"/><path d="M9.2 200.5H20.9M26.9 200.5H38.2"/><path d="M9.2 216.6H20.9M26.9 216.6H38.2"/></g><path d="M5.6 64.7Q3.2 66.6 5.6 68.5L17 67.0V66.1Z" fill="#fff"/><path d="M42 64.7Q44.4 66.6 42 68.5L30.6 67.0V66.1Z" fill="#fff"/><g font-family="Liberation Sans, sans-serif" font-weight="bold" font-size="7.6" fill="#fff"><text x="42" y="18.4" textLength="4.9" lengthAdjust="spacingAndGlyphs">0</text><text x="42" y="40.5" textLength="4.9" lengthAdjust="spacingAndGlyphs">5</text><text x="39.8" y="60.4" textLength="9.9" lengthAdjust="spacingAndGlyphs">10</text><text x="39.8" y="80.6" textLength="9.9" lengthAdjust="spacingAndGlyphs">15</text><text x="39.8" y="100.2" textLength="9.9" lengthAdjust="spacingAndGlyphs">20</text><text x="39.8" y="121.1" textLength="9.9" lengthAdjust="spacingAndGlyphs">25</text><text x="39.8" y="143.2" textLength="9.9" lengthAdjust="spacingAndGlyphs">30</text><text x="39.8" y="158.7" textLength="9.9" lengthAdjust="spacingAndGlyphs">35</text><text x="39.8" y="174.2" textLength="9.9" lengthAdjust="spacingAndGlyphs">40</text><text x="39.8" y="189.0" textLength="9.9" lengthAdjust="spacingAndGlyphs">50</text><text x="39.8" y="202.8" textLength="9.9" lengthAdjust="spacingAndGlyphs">60</text><text x="39.6" y="218.8" font-size="8.4" textLength="10" lengthAdjust="spacingAndGlyphs">oo</text></g></g></svg><div class="cap" style="left:1119.40px;top:688.90px"></div>
<!-- master 3 -->
<div class="k" style="left:1202.45px;top:25.40px"><i></i></div><div class="b" style="left:1186.45px;top:74px"><span>AUX1</span></div><div class="b" style="left:1226.45px;top:74px"><span>AUX2</span></div><div class="b" style="left:1186.45px;top:112px"><span>AUX3</span></div><div class="b" style="left:1226.45px;top:112px"><span>AUX4</span></div><div class="pn" style="left:1185.55px;top:150.3px;width:73.8px;height:73.2px"><div class="t" style="left:37.00px;top:5.70px;font-size:11.8px;color:#f79a2a;font-weight:bold;transform:translateX(-50%) scaleX(0.86);">AUX 3</div><div class="t" style="left:37.00px;top:19.30px;font-size:8.6px;color:#f79a2a;font-weight:bold;transform:translateX(-50%) scaleX(0.8);">MASTER</div><svg class="a" style="left:0;top:0" width="74" height="73" viewBox="0 0 74 73"><defs><linearGradient id="g13y" x1="7.0" x2="37.9" y1="0" y2="0" gradientUnits="userSpaceOnUse"><stop offset="0" stop-color="#fff424"/><stop offset=".5" stop-color="#ffdc28"/><stop offset="1" stop-color="#fca824"/></linearGradient><linearGradient id="g13b" x1="37.5" x2="67.2" y1="0" y2="0" gradientUnits="userSpaceOnUse"><stop offset="0" stop-color="#4a70bc"/><stop offset=".5" stop-color="#364e90"/><stop offset="1" stop-color="#28305e"/></linearGradient></defs><path d="M7.0 64.6A30.1 30.1 0 0 1 37.89 34.51L37.54 47.71A16.9 16.9 0 0 0 20.200000000000003 64.6Z" fill="url(#g13y)"/><path d="M37.89 34.51A30.1 30.1 0 0 1 67.2 64.6H54.0A16.9 16.9 0 0 0 37.54 47.71Z" fill="url(#g13b)"/></svg><div class="t" style="left:37.10px;top:59.20px;font-size:7.2px;color:#f79a2a;font-weight:bold;transform:translateX(-50%) scaleX(0.88);">-11.0 dB</div></div><div class="k" style="left:1202.45px;top:231.50px"><i></i></div><div class="b" style="left:1186.45px;top:277px"></div><div class="b" style="left:1226.45px;top:277px"></div><div class="pn" style="left:1185.55px;top:316.3px;width:73.7px;height:73.4px"><div class="t" style="left:6.60px;top:1.90px;font-size:7px;color:#f4f4f4;font-weight:bold;letter-spacing:-.2px;">PGM</div><div class="a" style="left:6.2px;top:8.8px;width:61.6px;height:8px;background:linear-gradient(180deg,rgba(0,0,0,.25) 0,rgba(0,0,0,0) 15%,rgba(0,0,0,0) 36%,rgba(0,0,0,.5) 44%,rgba(0,0,0,.5) 56%,rgba(0,0,0,0) 64%,rgba(0,0,0,0) 85%,rgba(0,0,0,.25) 100%),repeating-linear-gradient(90deg,rgba(0,0,0,0) 0,rgba(0,0,0,0) 1.4px,rgba(0,0,0,.3) 1.4px,rgba(0,0,0,.3) 2px),linear-gradient(90deg,#0c4418 0%,#0f4c18 28%,#3e5414 42%,#6a5c12 55%,#6e4c10 74%,#641c10 86%,#5c1010 100%);filter:blur(.3px)"></div><div class="t" style="left:6.60px;top:20.35px;font-size:7px;color:#f4f4f4;font-weight:bold;letter-spacing:-.2px;">AUD</div><div class="a" style="left:6.2px;top:27.2px;width:61.6px;height:8px;background:linear-gradient(180deg,rgba(0,0,0,.25) 0,rgba(0,0,0,0) 15%,rgba(0,0,0,0) 36%,rgba(0,0,0,.5) 44%,rgba(0,0,0,.5) 56%,rgba(0,0,0,0) 64%,rgba(0,0,0,0) 85%,rgba(0,0,0,.25) 100%),repeating-linear-gradient(90deg,rgba(0,0,0,0) 0,rgba(0,0,0,0) 1.4px,rgba(0,0,0,.3) 1.4px,rgba(0,0,0,.3) 2px),linear-gradient(90deg,#0c4418 0%,#0f4c18 28%,#3e5414 42%,#6a5c12 55%,#6e4c10 74%,#641c10 86%,#5c1010 100%);filter:blur(.3px)"></div><div class="t" style="left:6.60px;top:38.80px;font-size:7px;color:#f4f4f4;font-weight:bold;letter-spacing:-.2px;">AUX</div><div class="a" style="left:6.2px;top:45.7px;width:61.6px;height:8px;background:linear-gradient(180deg,rgba(0,0,0,.25) 0,rgba(0,0,0,0) 15%,rgba(0,0,0,0) 36%,rgba(0,0,0,.5) 44%,rgba(0,0,0,.5) 56%,rgba(0,0,0,0) 64%,rgba(0,0,0,0) 85%,rgba(0,0,0,.25) 100%),repeating-linear-gradient(90deg,rgba(0,0,0,0) 0,rgba(0,0,0,0) 1.4px,rgba(0,0,0,.3) 1.4px,rgba(0,0,0,.3) 2px),linear-gradient(90deg,#0c4418 0%,#0f4c18 28%,#3e5414 42%,#6a5c12 55%,#6e4c10 74%,#641c10 86%,#5c1010 100%);filter:blur(.3px)"></div><div class="t" style="left:6.60px;top:57.25px;font-size:7px;color:#f4f4f4;font-weight:bold;letter-spacing:-.2px;">CUE</div><div class="a" style="left:6.2px;top:64.1px;width:61.6px;height:8px;background:linear-gradient(180deg,rgba(0,0,0,.25) 0,rgba(0,0,0,0) 15%,rgba(0,0,0,0) 36%,rgba(0,0,0,.5) 44%,rgba(0,0,0,.5) 56%,rgba(0,0,0,0) 64%,rgba(0,0,0,0) 85%,rgba(0,0,0,.25) 100%),repeating-linear-gradient(90deg,rgba(0,0,0,0) 0,rgba(0,0,0,0) 1.4px,rgba(0,0,0,.3) 1.4px,rgba(0,0,0,.3) 2px),linear-gradient(90deg,#0c4418 0%,#0f4c18 28%,#3e5414 42%,#6a5c12 55%,#6e4c10 74%,#641c10 86%,#5c1010 100%);filter:blur(.3px)"></div></div><div class="b" style="left:1186.45px;top:405px"><span class="n">EVENT<br>1</span></div><div class="b" style="left:1226.45px;top:405px"><span class="n">EVENT<br>2</span></div><div class="b" style="left:1186.45px;top:444px"><span class="n">EVENT<br>3</span></div><div class="b" style="left:1226.45px;top:444px"><span class="n">EVENT<br>4</span></div><div class="b" style="left:1186.45px;top:486px"><span>PGM</span></div><div class="b" style="left:1226.45px;top:486px"><span>AUD</span></div><div class="b" style="left:1186.45px;top:523px"><span>AUX</span></div><div class="b" style="left:1226.45px;top:523px"><span>OL</span></div><div class="b" style="left:1186.45px;top:566px"><span>SET</span></div><div class="b" style="left:1226.45px;top:566px"></div><div class="k" style="left:1202.45px;top:600.10px"><i></i></div><div class="pn" style="left:1185.65px;top:645.10px;width:75.4px;height:74.2px;background:#242422"><div class="a" style="left:0;top:0;width:100%;height:8.6px;background:#2c2c2a"></div><div class="t" style="left:37.70px;top:0.60px;font-size:8.2px;color:#7f9cec;font-weight:bold;transform:translateX(-50%);letter-spacing:-.35px;">MONITOR 3</div><div class="a" style="left:0;top:9px;width:100%;height:1px;background:#41599e"></div><div class="t" style="left:5.60px;top:12.20px;font-size:10.6px;color:#fff;font-weight:bold;letter-spacing:-.7px;">BL006S04</div><div class="t" style="left:5.60px;top:25.00px;font-size:9.2px;color:#7790e6;font-weight:bold;letter-spacing:-.35px;">Blade06</div><svg class="a" style="left:6.6px;top:47.6px" width="7" height="8" viewBox="0 0 7 8"><path d="M0 2.6H2L5.4 0V8L2 5.4H0Z" fill="#7f9cec"/></svg><div class="a" style="left:14.75px;top:48.8px;width:23.80px;height:5px;background:#ffe81a"></div><div class="a" style="left:38.55px;top:48.8px;width:29.80px;height:5px;background:#1f6ad0"></div><div class="a" style="left:37.55px;top:47.6px;width:2.4px;height:7.4px;background:#f4f4f4;border-radius:1px"></div><div class="a" style="left:0;top:64.6px;width:100%;height:1px;background:#3a539a"></div><div class="a" style="left:0;top:66.4px;width:100%;height:7.8px;background:#2e2e2c"></div></div><div class="b" style="left:1186.45px;top:730px"><span>TB</span></div><div class="b" style="left:1226.45px;top:730px"><span>DIM</span></div><div class="k" style="left:1202.45px;top:764.60px"><i></i></div>
<!-- master 4 -->
<div class="k" style="left:1293.10px;top:25.40px"><i></i></div><div class="b" style="left:1277.10px;top:74px"><span>AUX1<br>TB</span></div><div class="b" style="left:1317.10px;top:74px"><span>AUX2<br>TB</span></div><div class="b" style="left:1277.10px;top:112px"><span>AUX3<br>TB</span></div><div class="b" style="left:1317.10px;top:112px"><span>AUX4<br>TB</span></div><div class="pn" style="left:1276.20px;top:150.3px;width:73.8px;height:73.2px"><div class="t" style="left:37.00px;top:5.70px;font-size:11.8px;color:#f79a2a;font-weight:bold;transform:translateX(-50%) scaleX(0.86);">AUX 3</div><div class="t" style="left:37.00px;top:19.30px;font-size:8.6px;color:#f79a2a;font-weight:bold;transform:translateX(-50%) scaleX(0.8);">MASTER</div><svg class="a" style="left:0;top:0" width="74" height="73" viewBox="0 0 74 73"><defs><linearGradient id="g14y" x1="7.0" x2="37.9" y1="0" y2="0" gradientUnits="userSpaceOnUse"><stop offset="0" stop-color="#fff424"/><stop offset=".5" stop-color="#ffdc28"/><stop offset="1" stop-color="#fca824"/></linearGradient><linearGradient id="g14b" x1="37.5" x2="67.2" y1="0" y2="0" gradientUnits="userSpaceOnUse"><stop offset="0" stop-color="#4a70bc"/><stop offset=".5" stop-color="#364e90"/><stop offset="1" stop-color="#28305e"/></linearGradient></defs><path d="M7.0 64.6A30.1 30.1 0 0 1 37.89 34.51L37.54 47.71A16.9 16.9 0 0 0 20.200000000000003 64.6Z" fill="url(#g14y)"/><path d="M37.89 34.51A30.1 30.1 0 0 1 67.2 64.6H54.0A16.9 16.9 0 0 0 37.54 47.71Z" fill="url(#g14b)"/></svg><div class="t" style="left:37.10px;top:59.20px;font-size:7.2px;color:#f79a2a;font-weight:bold;transform:translateX(-50%) scaleX(0.88);">-11.0 dB</div></div><div class="k" style="left:1293.10px;top:231.50px"><i></i></div><div class="b" style="left:1277.10px;top:277px"></div><div class="b" style="left:1317.10px;top:277px"></div><div class="pn" style="left:1276.50px;top:316.3px;width:73.6px;height:73.4px"><div class="t" style="left:36.40px;top:21.60px;font-size:11.2px;color:#fff;font-weight:bold;transform:translateX(-50%);letter-spacing:-.25px;">9:47:26 AM</div><div class="t" style="left:36.40px;top:40.70px;font-size:9.6px;color:#fff;font-weight:bold;transform:translateX(-50%);letter-spacing:-.3px;">Thu, Mar 21</div></div><div class="b" style="left:1277.10px;top:405px"></div><div class="b" style="left:1317.10px;top:405px"><span>DYN<br>SCRN</span></div><div class="b" style="left:1277.10px;top:444px"><span>AUX<br>SCRN</span></div><div class="b mag" style="left:1317.10px;top:444px"><span>HOME<br>SCRN</span></div><div class="b" style="left:1277.10px;top:486px"><span>PGM</span></div><div class="b" style="left:1317.10px;top:486px"><span>AUD</span></div><div class="b" style="left:1277.10px;top:523px"><span>AUX</span></div><div class="b" style="left:1317.10px;top:523px"><span>OL</span></div><div class="b" style="left:1277.10px;top:566px"><span>SET</span></div><div class="b" style="left:1317.10px;top:566px"></div><div class="k" style="left:1293.10px;top:600.10px"><i></i></div><div class="pn" style="left:1276.30px;top:645.10px;width:75.4px;height:74.2px;background:#242422"><div class="a" style="left:0;top:0;width:100%;height:8.6px;background:#2c2c2a"></div><div class="t" style="left:37.70px;top:0.60px;font-size:8.2px;color:#7f9cec;font-weight:bold;transform:translateX(-50%);letter-spacing:-.35px;">MONITOR 4</div><div class="a" style="left:0;top:9px;width:100%;height:1px;background:#41599e"></div><div class="t" style="left:5.60px;top:12.20px;font-size:10.6px;color:#fff;font-weight:bold;letter-spacing:-.7px;">BL006S04</div><div class="t" style="left:5.60px;top:25.00px;font-size:9.2px;color:#7790e6;font-weight:bold;letter-spacing:-.35px;">Blade06</div><svg class="a" style="left:6.6px;top:47.6px" width="7" height="8" viewBox="0 0 7 8"><path d="M0 2.6H2L5.4 0V8L2 5.4H0Z" fill="#7f9cec"/></svg><div class="a" style="left:14.70px;top:48.8px;width:38.40px;height:5px;background:#ffe81a"></div><div class="a" style="left:53.10px;top:48.8px;width:15.40px;height:5px;background:#1f6ad0"></div><div class="a" style="left:52.10px;top:47.6px;width:2.4px;height:7.4px;background:#f4f4f4;border-radius:1px"></div><div class="a" style="left:0;top:64.6px;width:100%;height:1px;background:#3a539a"></div><div class="a" style="left:0;top:66.4px;width:100%;height:7.8px;background:#2e2e2c"></div></div><div class="b" style="left:1277.10px;top:730px"><span>TB</span></div><div class="b" style="left:1317.10px;top:730px"><span>DIM</span></div><div class="k" style="left:1293.10px;top:764.60px"><i></i></div>
<!-- dynamics column -->
<div class="b" style="left:1367.75px;top:74px"><span>EXP</span></div><div class="b" style="left:1407.75px;top:74px"><span>EXP<br>IN</span></div><div class="b yel" style="left:1367.75px;top:112px"><span>COMP</span></div><div class="b" style="left:1407.75px;top:112px"><span>COMP<br>IN</span></div><div class="b" style="left:1367.75px;top:164px"><span>HIGH</span></div><div class="b" style="left:1407.75px;top:164px"><span class="n">EQ IN</span></div><div class="b" style="left:1367.75px;top:202px"><span>HIGH<br>MID</span></div><div class="b" style="left:1407.75px;top:202px"><span>HPF</span></div><div class="b" style="left:1367.75px;top:240px"><span>LOW<br>MID</span></div><div class="b" style="left:1407.75px;top:240px"><span>LPF</span></div><div class="b" style="left:1367.75px;top:277px"><span>LOW</span></div><div class="b" style="left:1407.75px;top:277px"><span class="n">SHELF</span></div><div class="pn" style="left:1366.65px;top:316.5px;width:74.2px;height:73.3px"><div class="t" style="left:36.60px;top:4.40px;font-size:8.3px;color:#f2f2e8;font-weight:bold;transform:translateX(-50%);letter-spacing:-.4px;">DYNAMICS</div><svg class="a" style="left:6.2px;top:15.4px" width="62" height="55" viewBox="0 0 62 55"><defs><linearGradient id="dyg" x1="0" x2="1" y1="0" y2="0"><stop offset="0" stop-color="#213f7e"/><stop offset=".5" stop-color="#3e74c0"/><stop offset="1" stop-color="#1c3672"/></linearGradient><linearGradient id="dyv" x1="0" x2="0" y1="0" y2="1"><stop offset="0" stop-color="#000" stop-opacity=".1"/><stop offset=".5" stop-color="#000" stop-opacity="0"/><stop offset="1" stop-color="#000" stop-opacity=".1"/></linearGradient></defs><rect x=".5" y=".5" width="61" height="54" fill="url(#dyg)"/><rect x=".5" y=".5" width="61" height="54" fill="url(#dyv)"/><g stroke="#a0c0f0" stroke-width=".6" stroke-opacity=".7"><path d="M5.58 .5V54.5"/><path d="M10.67 .5V54.5"/><path d="M15.75 .5V54.5"/><path d="M20.83 .5V54.5"/><path d="M25.92 .5V54.5"/><path d="M31.00 .5V54.5"/><path d="M36.08 .5V54.5"/><path d="M41.17 .5V54.5"/><path d="M46.25 .5V54.5"/><path d="M51.33 .5V54.5"/><path d="M56.42 .5V54.5"/><path d="M.5 7.25H61.5"/><path d="M.5 14.00H61.5"/><path d="M.5 20.75H61.5"/><path d="M.5 27.50H61.5"/><path d="M.5 34.25H61.5"/><path d="M.5 41.00H61.5"/><path d="M.5 47.75H61.5"/></g><rect x=".5" y=".5" width="61" height="54" fill="none" stroke="#d6d6d6" stroke-width="1"/></svg></div><div class="pn" style="left:1366.65px;top:409.4px;width:74.2px;height:72.9px"><div class="t" style="left:36.60px;top:4.60px;font-size:8.3px;color:#f2f2e8;font-weight:bold;transform:translateX(-50%);letter-spacing:-.4px;">COMPRESSOR</div><div class="t" style="left:5.00px;top:16.40px;font-size:7.2px;color:#f0f0f0;letter-spacing:-.25px;-webkit-text-stroke:.25px #f0f0f0;">Thresh</div><div class="t" style="left:40.60px;top:16.40px;font-size:7.2px;color:#b8b8b8;letter-spacing:-.6px;">---</div><div class="t" style="left:5.00px;top:26.25px;font-size:7.2px;color:#f0f0f0;letter-spacing:-.25px;-webkit-text-stroke:.25px #f0f0f0;">Ratio</div><div class="t" style="left:40.60px;top:26.25px;font-size:7.2px;color:#b8b8b8;letter-spacing:-.6px;">---</div><div class="t" style="left:5.00px;top:36.10px;font-size:7.2px;color:#f0f0f0;letter-spacing:-.25px;-webkit-text-stroke:.25px #f0f0f0;">Attack</div><div class="t" style="left:40.60px;top:36.10px;font-size:7.2px;color:#b8b8b8;letter-spacing:-.6px;">---</div><div class="t" style="left:5.00px;top:45.95px;font-size:7.2px;color:#f0f0f0;letter-spacing:-.25px;-webkit-text-stroke:.25px #f0f0f0;">Release</div><div class="t" style="left:40.60px;top:45.95px;font-size:7.2px;color:#b8b8b8;letter-spacing:-.6px;">---</div><div class="t" style="left:5.00px;top:55.80px;font-size:7.2px;color:#f0f0f0;letter-spacing:-.25px;-webkit-text-stroke:.25px #f0f0f0;">Makeup</div><div class="t" style="left:40.60px;top:55.80px;font-size:7.2px;color:#b8b8b8;letter-spacing:-.6px;">---</div></div><div class="pn" style="left:1366.65px;top:502.9px;width:74.2px;height:72.9px"><div class="t" style="left:36.80px;top:4.40px;font-size:8.1px;color:#eeeee2;font-weight:bold;transform:translateX(-50%);letter-spacing:-.3px;">FUNCTIONS</div><div class="a" style="left:4.7px;top:14.2px;width:19.6px;height:19.6px;border-radius:50%;background:radial-gradient(circle closest-side at 50% 50%,#262626 0,#161616 50%,#1a1a1a 68%,#444 80%,#666 89%,#4c4c4c 95%,#262624 100%)"></div><div class="t" style="left:14.70px;top:19.60px;font-size:8.8px;color:#fff;font-weight:bold;transform:translateX(-50%);">1</div><div class="t" style="left:32.00px;top:19.70px;font-size:8.2px;color:#eeeee2;font-weight:bold;letter-spacing:-.45px;">THRESH</div><div class="a" style="left:4.7px;top:34.4px;width:19.6px;height:19.6px;border-radius:50%;background:radial-gradient(circle closest-side at 50% 50%,#262626 0,#161616 50%,#1a1a1a 68%,#444 80%,#666 89%,#4c4c4c 95%,#262624 100%)"></div><div class="t" style="left:14.70px;top:39.80px;font-size:8.8px;color:#fff;font-weight:bold;transform:translateX(-50%);">2</div><div class="t" style="left:32.00px;top:39.90px;font-size:8.2px;color:#eeeee2;font-weight:bold;letter-spacing:-.45px;">RATIO</div><div class="a" style="left:4.7px;top:54.6px;width:19.6px;height:19.6px;border-radius:50%;background:radial-gradient(circle closest-side at 50% 50%,#262626 0,#161616 50%,#1a1a1a 68%,#444 80%,#666 89%,#4c4c4c 95%,#262624 100%)"></div><div class="t" style="left:14.70px;top:60.00px;font-size:8.8px;color:#fff;font-weight:bold;transform:translateX(-50%);">3</div><div class="t" style="left:32.00px;top:60.10px;font-size:8.2px;color:#eeeee2;font-weight:bold;transform:scaleX(0.9);transform-origin:0 50%;letter-spacing:-.45px;">RELEASE</div></div><div class="k" style="left:1383.65px;top:598.00px"><i></i></div><div class="k" style="left:1383.65px;top:662.90px"><i></i></div><div class="k" style="left:1383.65px;top:727.60px"><i></i></div>
</body></html>
